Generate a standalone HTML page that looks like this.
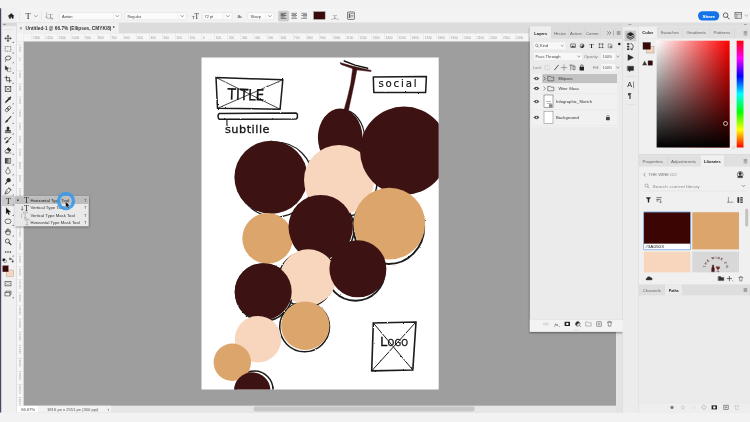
<!DOCTYPE html><html><head><meta charset="utf-8"><title>Photoshop</title>
<style>html,body{margin:0;padding:0;background:#f2f2f2;overflow:hidden}svg{display:block}text{font-family:"Liberation Sans", sans-serif;white-space:pre}</style></head><body>
<svg width="750" height="422" viewBox="0 0 750 422" style="will-change:transform">
<defs>
<linearGradient id="gw" x1="0" y1="0" x2="1" y2="0"><stop offset="0" stop-color="#fff"/><stop offset="1" stop-color="#ff0000"/></linearGradient>
<linearGradient id="gb" x1="0" y1="0" x2="0" y2="1"><stop offset="0" stop-color="#000" stop-opacity="0"/><stop offset="1" stop-color="#000"/></linearGradient>
<linearGradient id="hue" x1="0" y1="0" x2="0" y2="1"><stop offset="0" stop-color="#f00"/><stop offset="0.167" stop-color="#f0f"/><stop offset="0.333" stop-color="#00f"/><stop offset="0.5" stop-color="#0ff"/><stop offset="0.667" stop-color="#0f0"/><stop offset="0.833" stop-color="#ff0"/><stop offset="1" stop-color="#f00"/></linearGradient>
<clipPath id="doc"><rect x="201.5" y="57.5" width="237.2" height="332"/></clipPath>
<filter id="sh" x="-10%" y="-10%" width="120%" height="120%"><feGaussianBlur stdDeviation="1.2"/></filter>
<filter id="rough" x="-5%" y="-5%" width="110%" height="110%"><feTurbulence type="fractalNoise" baseFrequency="0.55" numOctaves="2" seed="3" result="n"/><feDisplacementMap in="SourceGraphic" in2="n" scale="1.8" xChannelSelector="R" yChannelSelector="G"/></filter>
</defs>
<rect x="0" y="0" width="750" height="422" fill="#f2f2f2" />
<rect x="0" y="0" width="750" height="8.3" fill="#f2f2f2" />
<rect x="0" y="8.3" width="750" height="14.4" fill="#f3f3f3" />
<rect x="0" y="8.0" width="750" height="0.5" fill="#e6e6e6" />
<rect x="0" y="8.5" width="750" height="0.9" fill="#f8f8f8" />
<rect x="16" y="22.5" width="608" height="390" fill="#dcdcdc" />
<rect x="23.5" y="41.3" width="593" height="364.5" fill="#9e9e9e" />
<rect x="16.5" y="22.8" width="102.3" height="10.6" fill="#f0f0f0" />
<text x="19.5" y="29.6" font-size="4.5" fill="#555" text-anchor="start" font-weight="normal" >×</text>
<text x="25.6" y="29.7" font-size="4.7" fill="#333" text-anchor="start" font-weight="bold" textLength="89" lengthAdjust="spacingAndGlyphs" >Untitled-1 @ 66.7% (Ellipses, CMYK/8) *</text>
<rect x="16.5" y="33.4" width="600" height="7.9" fill="#f6f6f6" />
<rect x="16.5" y="33.4" width="7" height="372.4" fill="#f6f6f6" />
<rect x="16.5" y="41.0" width="600" height="0.4" fill="#cfcfcf" />
<rect x="23.3" y="33.2" width="0.4" height="372.6" fill="#cfcfcf" />
<rect x="31.72" y="33.4" width="0.35" height="7.6" fill="#d6d6d6" />
<rect x="34.98" y="39.2" width="0.3" height="1.8" fill="#dcdcdc" />
<rect x="38.25" y="38.4" width="0.3" height="2.6" fill="#dcdcdc" />
<rect x="41.52" y="39.2" width="0.3" height="1.8" fill="#dcdcdc" />
<text x="32.92" y="39.4" font-size="3.2" fill="#9a9a9a" text-anchor="start" font-weight="normal" >1300</text>
<rect x="44.78" y="33.4" width="0.35" height="7.6" fill="#d6d6d6" />
<rect x="48.05" y="39.2" width="0.3" height="1.8" fill="#dcdcdc" />
<rect x="51.31" y="38.4" width="0.3" height="2.6" fill="#dcdcdc" />
<rect x="54.58" y="39.2" width="0.3" height="1.8" fill="#dcdcdc" />
<text x="45.98" y="39.4" font-size="3.2" fill="#9a9a9a" text-anchor="start" font-weight="normal" >1200</text>
<rect x="57.84" y="33.4" width="0.35" height="7.6" fill="#d6d6d6" />
<rect x="61.11" y="39.2" width="0.3" height="1.8" fill="#dcdcdc" />
<rect x="64.37" y="38.4" width="0.3" height="2.6" fill="#dcdcdc" />
<rect x="67.64" y="39.2" width="0.3" height="1.8" fill="#dcdcdc" />
<text x="59.04" y="39.4" font-size="3.2" fill="#9a9a9a" text-anchor="start" font-weight="normal" >1100</text>
<rect x="70.9" y="33.4" width="0.35" height="7.6" fill="#d6d6d6" />
<rect x="74.17" y="39.2" width="0.3" height="1.8" fill="#dcdcdc" />
<rect x="77.43" y="38.4" width="0.3" height="2.6" fill="#dcdcdc" />
<rect x="80.7" y="39.2" width="0.3" height="1.8" fill="#dcdcdc" />
<text x="72.1" y="39.4" font-size="3.2" fill="#9a9a9a" text-anchor="start" font-weight="normal" >1000</text>
<rect x="83.96" y="33.4" width="0.35" height="7.6" fill="#d6d6d6" />
<rect x="87.22" y="39.2" width="0.3" height="1.8" fill="#dcdcdc" />
<rect x="90.49" y="38.4" width="0.3" height="2.6" fill="#dcdcdc" />
<rect x="93.75" y="39.2" width="0.3" height="1.8" fill="#dcdcdc" />
<text x="85.16" y="39.4" font-size="3.2" fill="#9a9a9a" text-anchor="start" font-weight="normal" >900</text>
<rect x="97.02" y="33.4" width="0.35" height="7.6" fill="#d6d6d6" />
<rect x="100.28" y="39.2" width="0.3" height="1.8" fill="#dcdcdc" />
<rect x="103.55" y="38.4" width="0.3" height="2.6" fill="#dcdcdc" />
<rect x="106.81" y="39.2" width="0.3" height="1.8" fill="#dcdcdc" />
<text x="98.22" y="39.4" font-size="3.2" fill="#9a9a9a" text-anchor="start" font-weight="normal" >800</text>
<rect x="110.08" y="33.4" width="0.35" height="7.6" fill="#d6d6d6" />
<rect x="113.34" y="39.2" width="0.3" height="1.8" fill="#dcdcdc" />
<rect x="116.61" y="38.4" width="0.3" height="2.6" fill="#dcdcdc" />
<rect x="119.88" y="39.2" width="0.3" height="1.8" fill="#dcdcdc" />
<text x="111.28" y="39.4" font-size="3.2" fill="#9a9a9a" text-anchor="start" font-weight="normal" >700</text>
<rect x="123.14" y="33.4" width="0.35" height="7.6" fill="#d6d6d6" />
<rect x="126.41" y="39.2" width="0.3" height="1.8" fill="#dcdcdc" />
<rect x="129.67" y="38.4" width="0.3" height="2.6" fill="#dcdcdc" />
<rect x="132.94" y="39.2" width="0.3" height="1.8" fill="#dcdcdc" />
<text x="124.34" y="39.4" font-size="3.2" fill="#9a9a9a" text-anchor="start" font-weight="normal" >600</text>
<rect x="136.2" y="33.4" width="0.35" height="7.6" fill="#d6d6d6" />
<rect x="139.46" y="39.2" width="0.3" height="1.8" fill="#dcdcdc" />
<rect x="142.73" y="38.4" width="0.3" height="2.6" fill="#dcdcdc" />
<rect x="145.99" y="39.2" width="0.3" height="1.8" fill="#dcdcdc" />
<text x="137.4" y="39.4" font-size="3.2" fill="#9a9a9a" text-anchor="start" font-weight="normal" >500</text>
<rect x="149.26" y="33.4" width="0.35" height="7.6" fill="#d6d6d6" />
<rect x="152.52" y="39.2" width="0.3" height="1.8" fill="#dcdcdc" />
<rect x="155.79" y="38.4" width="0.3" height="2.6" fill="#dcdcdc" />
<rect x="159.05" y="39.2" width="0.3" height="1.8" fill="#dcdcdc" />
<text x="150.46" y="39.4" font-size="3.2" fill="#9a9a9a" text-anchor="start" font-weight="normal" >400</text>
<rect x="162.32" y="33.4" width="0.35" height="7.6" fill="#d6d6d6" />
<rect x="165.58" y="39.2" width="0.3" height="1.8" fill="#dcdcdc" />
<rect x="168.85" y="38.4" width="0.3" height="2.6" fill="#dcdcdc" />
<rect x="172.11" y="39.2" width="0.3" height="1.8" fill="#dcdcdc" />
<text x="163.52" y="39.4" font-size="3.2" fill="#9a9a9a" text-anchor="start" font-weight="normal" >300</text>
<rect x="175.38" y="33.4" width="0.35" height="7.6" fill="#d6d6d6" />
<rect x="178.64" y="39.2" width="0.3" height="1.8" fill="#dcdcdc" />
<rect x="181.91" y="38.4" width="0.3" height="2.6" fill="#dcdcdc" />
<rect x="185.17" y="39.2" width="0.3" height="1.8" fill="#dcdcdc" />
<text x="176.58" y="39.4" font-size="3.2" fill="#9a9a9a" text-anchor="start" font-weight="normal" >200</text>
<rect x="188.44" y="33.4" width="0.35" height="7.6" fill="#d6d6d6" />
<rect x="191.7" y="39.2" width="0.3" height="1.8" fill="#dcdcdc" />
<rect x="194.97" y="38.4" width="0.3" height="2.6" fill="#dcdcdc" />
<rect x="198.23" y="39.2" width="0.3" height="1.8" fill="#dcdcdc" />
<text x="189.64" y="39.4" font-size="3.2" fill="#9a9a9a" text-anchor="start" font-weight="normal" >100</text>
<rect x="201.5" y="33.4" width="0.35" height="7.6" fill="#d6d6d6" />
<rect x="204.76" y="39.2" width="0.3" height="1.8" fill="#dcdcdc" />
<rect x="208.03" y="38.4" width="0.3" height="2.6" fill="#dcdcdc" />
<rect x="211.29" y="39.2" width="0.3" height="1.8" fill="#dcdcdc" />
<text x="202.7" y="39.4" font-size="3.2" fill="#9a9a9a" text-anchor="start" font-weight="normal" >0</text>
<rect x="214.56" y="33.4" width="0.35" height="7.6" fill="#d6d6d6" />
<rect x="217.82" y="39.2" width="0.3" height="1.8" fill="#dcdcdc" />
<rect x="221.09" y="38.4" width="0.3" height="2.6" fill="#dcdcdc" />
<rect x="224.35" y="39.2" width="0.3" height="1.8" fill="#dcdcdc" />
<text x="215.76" y="39.4" font-size="3.2" fill="#9a9a9a" text-anchor="start" font-weight="normal" >100</text>
<rect x="227.62" y="33.4" width="0.35" height="7.6" fill="#d6d6d6" />
<rect x="230.88" y="39.2" width="0.3" height="1.8" fill="#dcdcdc" />
<rect x="234.15" y="38.4" width="0.3" height="2.6" fill="#dcdcdc" />
<rect x="237.41" y="39.2" width="0.3" height="1.8" fill="#dcdcdc" />
<text x="228.82" y="39.4" font-size="3.2" fill="#9a9a9a" text-anchor="start" font-weight="normal" >200</text>
<rect x="240.68" y="33.4" width="0.35" height="7.6" fill="#d6d6d6" />
<rect x="243.94" y="39.2" width="0.3" height="1.8" fill="#dcdcdc" />
<rect x="247.21" y="38.4" width="0.3" height="2.6" fill="#dcdcdc" />
<rect x="250.47" y="39.2" width="0.3" height="1.8" fill="#dcdcdc" />
<text x="241.88" y="39.4" font-size="3.2" fill="#9a9a9a" text-anchor="start" font-weight="normal" >300</text>
<rect x="253.74" y="33.4" width="0.35" height="7.6" fill="#d6d6d6" />
<rect x="257.0" y="39.2" width="0.3" height="1.8" fill="#dcdcdc" />
<rect x="260.27" y="38.4" width="0.3" height="2.6" fill="#dcdcdc" />
<rect x="263.54" y="39.2" width="0.3" height="1.8" fill="#dcdcdc" />
<text x="254.94" y="39.4" font-size="3.2" fill="#9a9a9a" text-anchor="start" font-weight="normal" >400</text>
<rect x="266.8" y="33.4" width="0.35" height="7.6" fill="#d6d6d6" />
<rect x="270.06" y="39.2" width="0.3" height="1.8" fill="#dcdcdc" />
<rect x="273.33" y="38.4" width="0.3" height="2.6" fill="#dcdcdc" />
<rect x="276.6" y="39.2" width="0.3" height="1.8" fill="#dcdcdc" />
<text x="268.0" y="39.4" font-size="3.2" fill="#9a9a9a" text-anchor="start" font-weight="normal" >500</text>
<rect x="279.86" y="33.4" width="0.35" height="7.6" fill="#d6d6d6" />
<rect x="283.12" y="39.2" width="0.3" height="1.8" fill="#dcdcdc" />
<rect x="286.39" y="38.4" width="0.3" height="2.6" fill="#dcdcdc" />
<rect x="289.66" y="39.2" width="0.3" height="1.8" fill="#dcdcdc" />
<text x="281.06" y="39.4" font-size="3.2" fill="#9a9a9a" text-anchor="start" font-weight="normal" >600</text>
<rect x="292.92" y="33.4" width="0.35" height="7.6" fill="#d6d6d6" />
<rect x="296.19" y="39.2" width="0.3" height="1.8" fill="#dcdcdc" />
<rect x="299.45" y="38.4" width="0.3" height="2.6" fill="#dcdcdc" />
<rect x="302.72" y="39.2" width="0.3" height="1.8" fill="#dcdcdc" />
<text x="294.12" y="39.4" font-size="3.2" fill="#9a9a9a" text-anchor="start" font-weight="normal" >700</text>
<rect x="305.98" y="33.4" width="0.35" height="7.6" fill="#d6d6d6" />
<rect x="309.25" y="39.2" width="0.3" height="1.8" fill="#dcdcdc" />
<rect x="312.51" y="38.4" width="0.3" height="2.6" fill="#dcdcdc" />
<rect x="315.78" y="39.2" width="0.3" height="1.8" fill="#dcdcdc" />
<text x="307.18" y="39.4" font-size="3.2" fill="#9a9a9a" text-anchor="start" font-weight="normal" >800</text>
<rect x="319.04" y="33.4" width="0.35" height="7.6" fill="#d6d6d6" />
<rect x="322.31" y="39.2" width="0.3" height="1.8" fill="#dcdcdc" />
<rect x="325.57" y="38.4" width="0.3" height="2.6" fill="#dcdcdc" />
<rect x="328.84" y="39.2" width="0.3" height="1.8" fill="#dcdcdc" />
<text x="320.24" y="39.4" font-size="3.2" fill="#9a9a9a" text-anchor="start" font-weight="normal" >900</text>
<rect x="332.1" y="33.4" width="0.35" height="7.6" fill="#d6d6d6" />
<rect x="335.37" y="39.2" width="0.3" height="1.8" fill="#dcdcdc" />
<rect x="338.63" y="38.4" width="0.3" height="2.6" fill="#dcdcdc" />
<rect x="341.9" y="39.2" width="0.3" height="1.8" fill="#dcdcdc" />
<text x="333.3" y="39.4" font-size="3.2" fill="#9a9a9a" text-anchor="start" font-weight="normal" >1000</text>
<rect x="345.16" y="33.4" width="0.35" height="7.6" fill="#d6d6d6" />
<rect x="348.42" y="39.2" width="0.3" height="1.8" fill="#dcdcdc" />
<rect x="351.69" y="38.4" width="0.3" height="2.6" fill="#dcdcdc" />
<rect x="354.95" y="39.2" width="0.3" height="1.8" fill="#dcdcdc" />
<text x="346.36" y="39.4" font-size="3.2" fill="#9a9a9a" text-anchor="start" font-weight="normal" >1100</text>
<rect x="358.22" y="33.4" width="0.35" height="7.6" fill="#d6d6d6" />
<rect x="361.49" y="39.2" width="0.3" height="1.8" fill="#dcdcdc" />
<rect x="364.75" y="38.4" width="0.3" height="2.6" fill="#dcdcdc" />
<rect x="368.02" y="39.2" width="0.3" height="1.8" fill="#dcdcdc" />
<text x="359.42" y="39.4" font-size="3.2" fill="#9a9a9a" text-anchor="start" font-weight="normal" >1200</text>
<rect x="371.28" y="33.4" width="0.35" height="7.6" fill="#d6d6d6" />
<rect x="374.54" y="39.2" width="0.3" height="1.8" fill="#dcdcdc" />
<rect x="377.81" y="38.4" width="0.3" height="2.6" fill="#dcdcdc" />
<rect x="381.07" y="39.2" width="0.3" height="1.8" fill="#dcdcdc" />
<text x="372.48" y="39.4" font-size="3.2" fill="#9a9a9a" text-anchor="start" font-weight="normal" >1300</text>
<rect x="384.34" y="33.4" width="0.35" height="7.6" fill="#d6d6d6" />
<rect x="387.61" y="39.2" width="0.3" height="1.8" fill="#dcdcdc" />
<rect x="390.87" y="38.4" width="0.3" height="2.6" fill="#dcdcdc" />
<rect x="394.14" y="39.2" width="0.3" height="1.8" fill="#dcdcdc" />
<text x="385.54" y="39.4" font-size="3.2" fill="#9a9a9a" text-anchor="start" font-weight="normal" >1400</text>
<rect x="397.4" y="33.4" width="0.35" height="7.6" fill="#d6d6d6" />
<rect x="400.66" y="39.2" width="0.3" height="1.8" fill="#dcdcdc" />
<rect x="403.93" y="38.4" width="0.3" height="2.6" fill="#dcdcdc" />
<rect x="407.19" y="39.2" width="0.3" height="1.8" fill="#dcdcdc" />
<text x="398.6" y="39.4" font-size="3.2" fill="#9a9a9a" text-anchor="start" font-weight="normal" >1500</text>
<rect x="410.46" y="33.4" width="0.35" height="7.6" fill="#d6d6d6" />
<rect x="413.73" y="39.2" width="0.3" height="1.8" fill="#dcdcdc" />
<rect x="416.99" y="38.4" width="0.3" height="2.6" fill="#dcdcdc" />
<rect x="420.26" y="39.2" width="0.3" height="1.8" fill="#dcdcdc" />
<text x="411.66" y="39.4" font-size="3.2" fill="#9a9a9a" text-anchor="start" font-weight="normal" >1600</text>
<rect x="423.52" y="33.4" width="0.35" height="7.6" fill="#d6d6d6" />
<rect x="426.78" y="39.2" width="0.3" height="1.8" fill="#dcdcdc" />
<rect x="430.05" y="38.4" width="0.3" height="2.6" fill="#dcdcdc" />
<rect x="433.31" y="39.2" width="0.3" height="1.8" fill="#dcdcdc" />
<text x="424.72" y="39.4" font-size="3.2" fill="#9a9a9a" text-anchor="start" font-weight="normal" >1700</text>
<rect x="436.58" y="33.4" width="0.35" height="7.6" fill="#d6d6d6" />
<rect x="439.85" y="39.2" width="0.3" height="1.8" fill="#dcdcdc" />
<rect x="443.11" y="38.4" width="0.3" height="2.6" fill="#dcdcdc" />
<rect x="446.38" y="39.2" width="0.3" height="1.8" fill="#dcdcdc" />
<text x="437.78" y="39.4" font-size="3.2" fill="#9a9a9a" text-anchor="start" font-weight="normal" >1800</text>
<rect x="449.64" y="33.4" width="0.35" height="7.6" fill="#d6d6d6" />
<rect x="452.9" y="39.2" width="0.3" height="1.8" fill="#dcdcdc" />
<rect x="456.17" y="38.4" width="0.3" height="2.6" fill="#dcdcdc" />
<rect x="459.44" y="39.2" width="0.3" height="1.8" fill="#dcdcdc" />
<text x="450.84" y="39.4" font-size="3.2" fill="#9a9a9a" text-anchor="start" font-weight="normal" >1900</text>
<rect x="462.7" y="33.4" width="0.35" height="7.6" fill="#d6d6d6" />
<rect x="465.96" y="39.2" width="0.3" height="1.8" fill="#dcdcdc" />
<rect x="469.23" y="38.4" width="0.3" height="2.6" fill="#dcdcdc" />
<rect x="472.5" y="39.2" width="0.3" height="1.8" fill="#dcdcdc" />
<text x="463.9" y="39.4" font-size="3.2" fill="#9a9a9a" text-anchor="start" font-weight="normal" >2000</text>
<rect x="475.76" y="33.4" width="0.35" height="7.6" fill="#d6d6d6" />
<rect x="479.02" y="39.2" width="0.3" height="1.8" fill="#dcdcdc" />
<rect x="482.29" y="38.4" width="0.3" height="2.6" fill="#dcdcdc" />
<rect x="485.56" y="39.2" width="0.3" height="1.8" fill="#dcdcdc" />
<text x="476.96" y="39.4" font-size="3.2" fill="#9a9a9a" text-anchor="start" font-weight="normal" >2100</text>
<rect x="488.82" y="33.4" width="0.35" height="7.6" fill="#d6d6d6" />
<rect x="492.08" y="39.2" width="0.3" height="1.8" fill="#dcdcdc" />
<rect x="495.35" y="38.4" width="0.3" height="2.6" fill="#dcdcdc" />
<rect x="498.62" y="39.2" width="0.3" height="1.8" fill="#dcdcdc" />
<text x="490.02" y="39.4" font-size="3.2" fill="#9a9a9a" text-anchor="start" font-weight="normal" >2200</text>
<rect x="501.88" y="33.4" width="0.35" height="7.6" fill="#d6d6d6" />
<rect x="505.14" y="39.2" width="0.3" height="1.8" fill="#dcdcdc" />
<rect x="508.41" y="38.4" width="0.3" height="2.6" fill="#dcdcdc" />
<rect x="511.68" y="39.2" width="0.3" height="1.8" fill="#dcdcdc" />
<text x="503.08" y="39.4" font-size="3.2" fill="#9a9a9a" text-anchor="start" font-weight="normal" >2300</text>
<rect x="514.94" y="33.4" width="0.35" height="7.6" fill="#d6d6d6" />
<rect x="518.21" y="39.2" width="0.3" height="1.8" fill="#dcdcdc" />
<rect x="521.47" y="38.4" width="0.3" height="2.6" fill="#dcdcdc" />
<rect x="524.74" y="39.2" width="0.3" height="1.8" fill="#dcdcdc" />
<text x="516.14" y="39.4" font-size="3.2" fill="#9a9a9a" text-anchor="start" font-weight="normal" >2400</text>
<rect x="528.0" y="33.4" width="0.35" height="7.6" fill="#d6d6d6" />
<rect x="531.26" y="39.2" width="0.3" height="1.8" fill="#dcdcdc" />
<rect x="534.53" y="38.4" width="0.3" height="2.6" fill="#dcdcdc" />
<rect x="537.79" y="39.2" width="0.3" height="1.8" fill="#dcdcdc" />
<text x="529.2" y="39.4" font-size="3.2" fill="#9a9a9a" text-anchor="start" font-weight="normal" >2500</text>
<rect x="541.06" y="33.4" width="0.35" height="7.6" fill="#d6d6d6" />
<rect x="544.32" y="39.2" width="0.3" height="1.8" fill="#dcdcdc" />
<rect x="547.59" y="38.4" width="0.3" height="2.6" fill="#dcdcdc" />
<rect x="550.85" y="39.2" width="0.3" height="1.8" fill="#dcdcdc" />
<text x="542.26" y="39.4" font-size="3.2" fill="#9a9a9a" text-anchor="start" font-weight="normal" >2600</text>
<rect x="554.12" y="33.4" width="0.35" height="7.6" fill="#d6d6d6" />
<rect x="557.38" y="39.2" width="0.3" height="1.8" fill="#dcdcdc" />
<rect x="560.65" y="38.4" width="0.3" height="2.6" fill="#dcdcdc" />
<rect x="563.91" y="39.2" width="0.3" height="1.8" fill="#dcdcdc" />
<text x="555.32" y="39.4" font-size="3.2" fill="#9a9a9a" text-anchor="start" font-weight="normal" >2700</text>
<rect x="567.18" y="33.4" width="0.35" height="7.6" fill="#d6d6d6" />
<rect x="570.45" y="39.2" width="0.3" height="1.8" fill="#dcdcdc" />
<rect x="573.71" y="38.4" width="0.3" height="2.6" fill="#dcdcdc" />
<rect x="576.98" y="39.2" width="0.3" height="1.8" fill="#dcdcdc" />
<text x="568.38" y="39.4" font-size="3.2" fill="#9a9a9a" text-anchor="start" font-weight="normal" >2800</text>
<rect x="580.24" y="33.4" width="0.35" height="7.6" fill="#d6d6d6" />
<rect x="583.5" y="39.2" width="0.3" height="1.8" fill="#dcdcdc" />
<rect x="586.77" y="38.4" width="0.3" height="2.6" fill="#dcdcdc" />
<rect x="590.03" y="39.2" width="0.3" height="1.8" fill="#dcdcdc" />
<text x="581.44" y="39.4" font-size="3.2" fill="#9a9a9a" text-anchor="start" font-weight="normal" >2900</text>
<rect x="593.3" y="33.4" width="0.35" height="7.6" fill="#d6d6d6" />
<rect x="596.56" y="39.2" width="0.3" height="1.8" fill="#dcdcdc" />
<rect x="599.83" y="38.4" width="0.3" height="2.6" fill="#dcdcdc" />
<rect x="603.09" y="39.2" width="0.3" height="1.8" fill="#dcdcdc" />
<text x="594.5" y="39.4" font-size="3.2" fill="#9a9a9a" text-anchor="start" font-weight="normal" >3000</text>
<rect x="606.36" y="33.4" width="0.35" height="7.6" fill="#d6d6d6" />
<rect x="609.62" y="39.2" width="0.3" height="1.8" fill="#dcdcdc" />
<rect x="612.89" y="38.4" width="0.3" height="2.6" fill="#dcdcdc" />
<text x="607.56" y="39.4" font-size="3.2" fill="#9a9a9a" text-anchor="start" font-weight="normal" >3100</text>
<rect x="16.7" y="44.44" width="6.6" height="0.35" fill="#d6d6d6" />
<rect x="21.6" y="47.7" width="1.7" height="0.3" fill="#dcdcdc" />
<rect x="20.8" y="50.97" width="2.5" height="0.3" fill="#dcdcdc" />
<rect x="21.6" y="54.23" width="1.7" height="0.3" fill="#dcdcdc" />
<text x="19.9" y="47.64" font-size="2.7" fill="#9a9a9a" text-anchor="middle">1</text>
<text x="19.9" y="49.74" font-size="2.7" fill="#9a9a9a" text-anchor="middle">0</text>
<text x="19.9" y="51.84" font-size="2.7" fill="#9a9a9a" text-anchor="middle">0</text>
<rect x="16.7" y="57.5" width="6.6" height="0.35" fill="#d6d6d6" />
<rect x="21.6" y="60.77" width="1.7" height="0.3" fill="#dcdcdc" />
<rect x="20.8" y="64.03" width="2.5" height="0.3" fill="#dcdcdc" />
<rect x="21.6" y="67.3" width="1.7" height="0.3" fill="#dcdcdc" />
<text x="19.9" y="60.7" font-size="2.7" fill="#9a9a9a" text-anchor="middle">0</text>
<rect x="16.7" y="70.56" width="6.6" height="0.35" fill="#d6d6d6" />
<rect x="21.6" y="73.83" width="1.7" height="0.3" fill="#dcdcdc" />
<rect x="20.8" y="77.09" width="2.5" height="0.3" fill="#dcdcdc" />
<rect x="21.6" y="80.36" width="1.7" height="0.3" fill="#dcdcdc" />
<text x="19.9" y="73.76" font-size="2.7" fill="#9a9a9a" text-anchor="middle">1</text>
<text x="19.9" y="75.86" font-size="2.7" fill="#9a9a9a" text-anchor="middle">0</text>
<text x="19.9" y="77.96" font-size="2.7" fill="#9a9a9a" text-anchor="middle">0</text>
<rect x="16.7" y="83.62" width="6.6" height="0.35" fill="#d6d6d6" />
<rect x="21.6" y="86.89" width="1.7" height="0.3" fill="#dcdcdc" />
<rect x="20.8" y="90.15" width="2.5" height="0.3" fill="#dcdcdc" />
<rect x="21.6" y="93.42" width="1.7" height="0.3" fill="#dcdcdc" />
<text x="19.9" y="86.82" font-size="2.7" fill="#9a9a9a" text-anchor="middle">2</text>
<text x="19.9" y="88.92" font-size="2.7" fill="#9a9a9a" text-anchor="middle">0</text>
<text x="19.9" y="91.02" font-size="2.7" fill="#9a9a9a" text-anchor="middle">0</text>
<rect x="16.7" y="96.68" width="6.6" height="0.35" fill="#d6d6d6" />
<rect x="21.6" y="99.95" width="1.7" height="0.3" fill="#dcdcdc" />
<rect x="20.8" y="103.21" width="2.5" height="0.3" fill="#dcdcdc" />
<rect x="21.6" y="106.48" width="1.7" height="0.3" fill="#dcdcdc" />
<text x="19.9" y="99.88" font-size="2.7" fill="#9a9a9a" text-anchor="middle">3</text>
<text x="19.9" y="101.98" font-size="2.7" fill="#9a9a9a" text-anchor="middle">0</text>
<text x="19.9" y="104.08" font-size="2.7" fill="#9a9a9a" text-anchor="middle">0</text>
<rect x="16.7" y="109.74" width="6.6" height="0.35" fill="#d6d6d6" />
<rect x="21.6" y="113.01" width="1.7" height="0.3" fill="#dcdcdc" />
<rect x="20.8" y="116.27" width="2.5" height="0.3" fill="#dcdcdc" />
<rect x="21.6" y="119.54" width="1.7" height="0.3" fill="#dcdcdc" />
<text x="19.9" y="112.94" font-size="2.7" fill="#9a9a9a" text-anchor="middle">4</text>
<text x="19.9" y="115.04" font-size="2.7" fill="#9a9a9a" text-anchor="middle">0</text>
<text x="19.9" y="117.14" font-size="2.7" fill="#9a9a9a" text-anchor="middle">0</text>
<rect x="16.7" y="122.8" width="6.6" height="0.35" fill="#d6d6d6" />
<rect x="21.6" y="126.06" width="1.7" height="0.3" fill="#dcdcdc" />
<rect x="20.8" y="129.33" width="2.5" height="0.3" fill="#dcdcdc" />
<rect x="21.6" y="132.59" width="1.7" height="0.3" fill="#dcdcdc" />
<text x="19.9" y="126.0" font-size="2.7" fill="#9a9a9a" text-anchor="middle">5</text>
<text x="19.9" y="128.1" font-size="2.7" fill="#9a9a9a" text-anchor="middle">0</text>
<text x="19.9" y="130.2" font-size="2.7" fill="#9a9a9a" text-anchor="middle">0</text>
<rect x="16.7" y="135.86" width="6.6" height="0.35" fill="#d6d6d6" />
<rect x="21.6" y="139.12" width="1.7" height="0.3" fill="#dcdcdc" />
<rect x="20.8" y="142.39" width="2.5" height="0.3" fill="#dcdcdc" />
<rect x="21.6" y="145.66" width="1.7" height="0.3" fill="#dcdcdc" />
<text x="19.9" y="139.06" font-size="2.7" fill="#9a9a9a" text-anchor="middle">6</text>
<text x="19.9" y="141.16" font-size="2.7" fill="#9a9a9a" text-anchor="middle">0</text>
<text x="19.9" y="143.26" font-size="2.7" fill="#9a9a9a" text-anchor="middle">0</text>
<rect x="16.7" y="148.92" width="6.6" height="0.35" fill="#d6d6d6" />
<rect x="21.6" y="152.19" width="1.7" height="0.3" fill="#dcdcdc" />
<rect x="20.8" y="155.45" width="2.5" height="0.3" fill="#dcdcdc" />
<rect x="21.6" y="158.72" width="1.7" height="0.3" fill="#dcdcdc" />
<text x="19.9" y="152.12" font-size="2.7" fill="#9a9a9a" text-anchor="middle">7</text>
<text x="19.9" y="154.22" font-size="2.7" fill="#9a9a9a" text-anchor="middle">0</text>
<text x="19.9" y="156.32" font-size="2.7" fill="#9a9a9a" text-anchor="middle">0</text>
<rect x="16.7" y="161.98" width="6.6" height="0.35" fill="#d6d6d6" />
<rect x="21.6" y="165.25" width="1.7" height="0.3" fill="#dcdcdc" />
<rect x="20.8" y="168.51" width="2.5" height="0.3" fill="#dcdcdc" />
<rect x="21.6" y="171.78" width="1.7" height="0.3" fill="#dcdcdc" />
<text x="19.9" y="165.18" font-size="2.7" fill="#9a9a9a" text-anchor="middle">8</text>
<text x="19.9" y="167.28" font-size="2.7" fill="#9a9a9a" text-anchor="middle">0</text>
<text x="19.9" y="169.38" font-size="2.7" fill="#9a9a9a" text-anchor="middle">0</text>
<rect x="16.7" y="175.04" width="6.6" height="0.35" fill="#d6d6d6" />
<rect x="21.6" y="178.31" width="1.7" height="0.3" fill="#dcdcdc" />
<rect x="20.8" y="181.57" width="2.5" height="0.3" fill="#dcdcdc" />
<rect x="21.6" y="184.84" width="1.7" height="0.3" fill="#dcdcdc" />
<text x="19.9" y="178.24" font-size="2.7" fill="#9a9a9a" text-anchor="middle">9</text>
<text x="19.9" y="180.34" font-size="2.7" fill="#9a9a9a" text-anchor="middle">0</text>
<text x="19.9" y="182.44" font-size="2.7" fill="#9a9a9a" text-anchor="middle">0</text>
<rect x="16.7" y="188.1" width="6.6" height="0.35" fill="#d6d6d6" />
<rect x="21.6" y="191.36" width="1.7" height="0.3" fill="#dcdcdc" />
<rect x="20.8" y="194.63" width="2.5" height="0.3" fill="#dcdcdc" />
<rect x="21.6" y="197.89" width="1.7" height="0.3" fill="#dcdcdc" />
<text x="19.9" y="191.3" font-size="2.7" fill="#9a9a9a" text-anchor="middle">1</text>
<text x="19.9" y="193.4" font-size="2.7" fill="#9a9a9a" text-anchor="middle">0</text>
<text x="19.9" y="195.5" font-size="2.7" fill="#9a9a9a" text-anchor="middle">0</text>
<text x="19.9" y="197.6" font-size="2.7" fill="#9a9a9a" text-anchor="middle">0</text>
<rect x="16.7" y="201.16" width="6.6" height="0.35" fill="#d6d6d6" />
<rect x="21.6" y="204.42" width="1.7" height="0.3" fill="#dcdcdc" />
<rect x="20.8" y="207.69" width="2.5" height="0.3" fill="#dcdcdc" />
<rect x="21.6" y="210.95" width="1.7" height="0.3" fill="#dcdcdc" />
<text x="19.9" y="204.36" font-size="2.7" fill="#9a9a9a" text-anchor="middle">1</text>
<text x="19.9" y="206.46" font-size="2.7" fill="#9a9a9a" text-anchor="middle">1</text>
<text x="19.9" y="208.56" font-size="2.7" fill="#9a9a9a" text-anchor="middle">0</text>
<text x="19.9" y="210.66" font-size="2.7" fill="#9a9a9a" text-anchor="middle">0</text>
<rect x="16.7" y="214.22" width="6.6" height="0.35" fill="#d6d6d6" />
<rect x="21.6" y="217.48" width="1.7" height="0.3" fill="#dcdcdc" />
<rect x="20.8" y="220.75" width="2.5" height="0.3" fill="#dcdcdc" />
<rect x="21.6" y="224.01" width="1.7" height="0.3" fill="#dcdcdc" />
<text x="19.9" y="217.42" font-size="2.7" fill="#9a9a9a" text-anchor="middle">1</text>
<text x="19.9" y="219.52" font-size="2.7" fill="#9a9a9a" text-anchor="middle">2</text>
<text x="19.9" y="221.62" font-size="2.7" fill="#9a9a9a" text-anchor="middle">0</text>
<text x="19.9" y="223.72" font-size="2.7" fill="#9a9a9a" text-anchor="middle">0</text>
<rect x="16.7" y="227.28" width="6.6" height="0.35" fill="#d6d6d6" />
<rect x="21.6" y="230.54" width="1.7" height="0.3" fill="#dcdcdc" />
<rect x="20.8" y="233.81" width="2.5" height="0.3" fill="#dcdcdc" />
<rect x="21.6" y="237.07" width="1.7" height="0.3" fill="#dcdcdc" />
<text x="19.9" y="230.48" font-size="2.7" fill="#9a9a9a" text-anchor="middle">1</text>
<text x="19.9" y="232.58" font-size="2.7" fill="#9a9a9a" text-anchor="middle">3</text>
<text x="19.9" y="234.68" font-size="2.7" fill="#9a9a9a" text-anchor="middle">0</text>
<text x="19.9" y="236.78" font-size="2.7" fill="#9a9a9a" text-anchor="middle">0</text>
<rect x="16.7" y="240.34" width="6.6" height="0.35" fill="#d6d6d6" />
<rect x="21.6" y="243.6" width="1.7" height="0.3" fill="#dcdcdc" />
<rect x="20.8" y="246.87" width="2.5" height="0.3" fill="#dcdcdc" />
<rect x="21.6" y="250.13" width="1.7" height="0.3" fill="#dcdcdc" />
<text x="19.9" y="243.54" font-size="2.7" fill="#9a9a9a" text-anchor="middle">1</text>
<text x="19.9" y="245.64" font-size="2.7" fill="#9a9a9a" text-anchor="middle">4</text>
<text x="19.9" y="247.74" font-size="2.7" fill="#9a9a9a" text-anchor="middle">0</text>
<text x="19.9" y="249.84" font-size="2.7" fill="#9a9a9a" text-anchor="middle">0</text>
<rect x="16.7" y="253.4" width="6.6" height="0.35" fill="#d6d6d6" />
<rect x="21.6" y="256.67" width="1.7" height="0.3" fill="#dcdcdc" />
<rect x="20.8" y="259.93" width="2.5" height="0.3" fill="#dcdcdc" />
<rect x="21.6" y="263.19" width="1.7" height="0.3" fill="#dcdcdc" />
<text x="19.9" y="256.6" font-size="2.7" fill="#9a9a9a" text-anchor="middle">1</text>
<text x="19.9" y="258.7" font-size="2.7" fill="#9a9a9a" text-anchor="middle">5</text>
<text x="19.9" y="260.8" font-size="2.7" fill="#9a9a9a" text-anchor="middle">0</text>
<text x="19.9" y="262.9" font-size="2.7" fill="#9a9a9a" text-anchor="middle">0</text>
<rect x="16.7" y="266.46" width="6.6" height="0.35" fill="#d6d6d6" />
<rect x="21.6" y="269.73" width="1.7" height="0.3" fill="#dcdcdc" />
<rect x="20.8" y="272.99" width="2.5" height="0.3" fill="#dcdcdc" />
<rect x="21.6" y="276.26" width="1.7" height="0.3" fill="#dcdcdc" />
<text x="19.9" y="269.66" font-size="2.7" fill="#9a9a9a" text-anchor="middle">1</text>
<text x="19.9" y="271.76" font-size="2.7" fill="#9a9a9a" text-anchor="middle">6</text>
<text x="19.9" y="273.86" font-size="2.7" fill="#9a9a9a" text-anchor="middle">0</text>
<text x="19.9" y="275.96" font-size="2.7" fill="#9a9a9a" text-anchor="middle">0</text>
<rect x="16.7" y="279.52" width="6.6" height="0.35" fill="#d6d6d6" />
<rect x="21.6" y="282.78" width="1.7" height="0.3" fill="#dcdcdc" />
<rect x="20.8" y="286.05" width="2.5" height="0.3" fill="#dcdcdc" />
<rect x="21.6" y="289.31" width="1.7" height="0.3" fill="#dcdcdc" />
<text x="19.9" y="282.72" font-size="2.7" fill="#9a9a9a" text-anchor="middle">1</text>
<text x="19.9" y="284.82" font-size="2.7" fill="#9a9a9a" text-anchor="middle">7</text>
<text x="19.9" y="286.92" font-size="2.7" fill="#9a9a9a" text-anchor="middle">0</text>
<text x="19.9" y="289.02" font-size="2.7" fill="#9a9a9a" text-anchor="middle">0</text>
<rect x="16.7" y="292.58" width="6.6" height="0.35" fill="#d6d6d6" />
<rect x="21.6" y="295.85" width="1.7" height="0.3" fill="#dcdcdc" />
<rect x="20.8" y="299.11" width="2.5" height="0.3" fill="#dcdcdc" />
<rect x="21.6" y="302.38" width="1.7" height="0.3" fill="#dcdcdc" />
<text x="19.9" y="295.78" font-size="2.7" fill="#9a9a9a" text-anchor="middle">1</text>
<text x="19.9" y="297.88" font-size="2.7" fill="#9a9a9a" text-anchor="middle">8</text>
<text x="19.9" y="299.98" font-size="2.7" fill="#9a9a9a" text-anchor="middle">0</text>
<text x="19.9" y="302.08" font-size="2.7" fill="#9a9a9a" text-anchor="middle">0</text>
<rect x="16.7" y="305.64" width="6.6" height="0.35" fill="#d6d6d6" />
<rect x="21.6" y="308.9" width="1.7" height="0.3" fill="#dcdcdc" />
<rect x="20.8" y="312.17" width="2.5" height="0.3" fill="#dcdcdc" />
<rect x="21.6" y="315.44" width="1.7" height="0.3" fill="#dcdcdc" />
<text x="19.9" y="308.84" font-size="2.7" fill="#9a9a9a" text-anchor="middle">1</text>
<text x="19.9" y="310.94" font-size="2.7" fill="#9a9a9a" text-anchor="middle">9</text>
<text x="19.9" y="313.04" font-size="2.7" fill="#9a9a9a" text-anchor="middle">0</text>
<text x="19.9" y="315.14" font-size="2.7" fill="#9a9a9a" text-anchor="middle">0</text>
<rect x="16.7" y="318.7" width="6.6" height="0.35" fill="#d6d6d6" />
<rect x="21.6" y="321.96" width="1.7" height="0.3" fill="#dcdcdc" />
<rect x="20.8" y="325.23" width="2.5" height="0.3" fill="#dcdcdc" />
<rect x="21.6" y="328.5" width="1.7" height="0.3" fill="#dcdcdc" />
<text x="19.9" y="321.9" font-size="2.7" fill="#9a9a9a" text-anchor="middle">2</text>
<text x="19.9" y="324.0" font-size="2.7" fill="#9a9a9a" text-anchor="middle">0</text>
<text x="19.9" y="326.1" font-size="2.7" fill="#9a9a9a" text-anchor="middle">0</text>
<text x="19.9" y="328.2" font-size="2.7" fill="#9a9a9a" text-anchor="middle">0</text>
<rect x="16.7" y="331.76" width="6.6" height="0.35" fill="#d6d6d6" />
<rect x="21.6" y="335.02" width="1.7" height="0.3" fill="#dcdcdc" />
<rect x="20.8" y="338.29" width="2.5" height="0.3" fill="#dcdcdc" />
<rect x="21.6" y="341.56" width="1.7" height="0.3" fill="#dcdcdc" />
<text x="19.9" y="334.96" font-size="2.7" fill="#9a9a9a" text-anchor="middle">2</text>
<text x="19.9" y="337.06" font-size="2.7" fill="#9a9a9a" text-anchor="middle">1</text>
<text x="19.9" y="339.16" font-size="2.7" fill="#9a9a9a" text-anchor="middle">0</text>
<text x="19.9" y="341.26" font-size="2.7" fill="#9a9a9a" text-anchor="middle">0</text>
<rect x="16.7" y="344.82" width="6.6" height="0.35" fill="#d6d6d6" />
<rect x="21.6" y="348.08" width="1.7" height="0.3" fill="#dcdcdc" />
<rect x="20.8" y="351.35" width="2.5" height="0.3" fill="#dcdcdc" />
<rect x="21.6" y="354.62" width="1.7" height="0.3" fill="#dcdcdc" />
<text x="19.9" y="348.02" font-size="2.7" fill="#9a9a9a" text-anchor="middle">2</text>
<text x="19.9" y="350.12" font-size="2.7" fill="#9a9a9a" text-anchor="middle">2</text>
<text x="19.9" y="352.22" font-size="2.7" fill="#9a9a9a" text-anchor="middle">0</text>
<text x="19.9" y="354.32" font-size="2.7" fill="#9a9a9a" text-anchor="middle">0</text>
<rect x="16.7" y="357.88" width="6.6" height="0.35" fill="#d6d6d6" />
<rect x="21.6" y="361.14" width="1.7" height="0.3" fill="#dcdcdc" />
<rect x="20.8" y="364.41" width="2.5" height="0.3" fill="#dcdcdc" />
<rect x="21.6" y="367.68" width="1.7" height="0.3" fill="#dcdcdc" />
<text x="19.9" y="361.08" font-size="2.7" fill="#9a9a9a" text-anchor="middle">2</text>
<text x="19.9" y="363.18" font-size="2.7" fill="#9a9a9a" text-anchor="middle">3</text>
<text x="19.9" y="365.28" font-size="2.7" fill="#9a9a9a" text-anchor="middle">0</text>
<text x="19.9" y="367.38" font-size="2.7" fill="#9a9a9a" text-anchor="middle">0</text>
<rect x="16.7" y="370.94" width="6.6" height="0.35" fill="#d6d6d6" />
<rect x="21.6" y="374.2" width="1.7" height="0.3" fill="#dcdcdc" />
<rect x="20.8" y="377.47" width="2.5" height="0.3" fill="#dcdcdc" />
<rect x="21.6" y="380.74" width="1.7" height="0.3" fill="#dcdcdc" />
<text x="19.9" y="374.14" font-size="2.7" fill="#9a9a9a" text-anchor="middle">2</text>
<text x="19.9" y="376.24" font-size="2.7" fill="#9a9a9a" text-anchor="middle">4</text>
<text x="19.9" y="378.34" font-size="2.7" fill="#9a9a9a" text-anchor="middle">0</text>
<text x="19.9" y="380.44" font-size="2.7" fill="#9a9a9a" text-anchor="middle">0</text>
<rect x="16.7" y="384.0" width="6.6" height="0.35" fill="#d6d6d6" />
<rect x="21.6" y="387.26" width="1.7" height="0.3" fill="#dcdcdc" />
<rect x="20.8" y="390.53" width="2.5" height="0.3" fill="#dcdcdc" />
<rect x="21.6" y="393.8" width="1.7" height="0.3" fill="#dcdcdc" />
<text x="19.9" y="387.2" font-size="2.7" fill="#9a9a9a" text-anchor="middle">2</text>
<text x="19.9" y="389.3" font-size="2.7" fill="#9a9a9a" text-anchor="middle">5</text>
<text x="19.9" y="391.4" font-size="2.7" fill="#9a9a9a" text-anchor="middle">0</text>
<text x="19.9" y="393.5" font-size="2.7" fill="#9a9a9a" text-anchor="middle">0</text>
<rect x="16.7" y="397.06" width="6.6" height="0.35" fill="#d6d6d6" />
<rect x="21.6" y="400.32" width="1.7" height="0.3" fill="#dcdcdc" />
<rect x="20.8" y="403.59" width="2.5" height="0.3" fill="#dcdcdc" />
<text x="19.9" y="400.26" font-size="2.7" fill="#9a9a9a" text-anchor="middle">2</text>
<text x="19.9" y="402.36" font-size="2.7" fill="#9a9a9a" text-anchor="middle">6</text>
<text x="19.9" y="404.46" font-size="2.7" fill="#9a9a9a" text-anchor="middle">0</text>
<text x="19.9" y="406.56" font-size="2.7" fill="#9a9a9a" text-anchor="middle">0</text>
<rect x="16.5" y="33.4" width="7" height="7.9" fill="#f6f6f6" />
<rect x="201.5" y="57.5" width="237.2" height="332" fill="#ffffff" />
<g clip-path="url(#doc)">
<circle cx="275.5" cy="179.5" r="37.5" fill="none" stroke="#1a1a1a" stroke-width="1.2" filter="url(#rough)"/>
<circle cx="341.5" cy="181.5" r="35.6" fill="none" stroke="#1a1a1a" stroke-width="1.5" filter="url(#rough)"/>
<ellipse cx="388.8" cy="227" rx="35.4" ry="37" fill="none" stroke="#1a1a1a" stroke-width="1.9" filter="url(#rough)"/>
<circle cx="322" cy="229" r="32" fill="none" stroke="#1a1a1a" stroke-width="1.5" filter="url(#rough)"/>
<circle cx="355.5" cy="271.3" r="29.4" fill="none" stroke="#1a1a1a" stroke-width="1.9" filter="url(#rough)"/>
<circle cx="306" cy="279.5" r="27.5" fill="none" stroke="#1a1a1a" stroke-width="1.5" filter="url(#rough)"/>
<circle cx="304.6" cy="326.8" r="24.9" fill="none" stroke="#1a1a1a" stroke-width="1.5" filter="url(#rough)"/>
<circle cx="254.5" cy="389.5" r="18.5" fill="none" stroke="#1a1a1a" stroke-width="1.5" filter="url(#rough)"/>
<circle cx="264" cy="292.5" r="28.5" fill="none" stroke="#1a1a1a" stroke-width="1.5" filter="url(#rough)"/>
<ellipse cx="342" cy="138.6" rx="22.6" ry="29" fill="none" stroke="#1a1a1a" stroke-width="1.2" filter="url(#rough)"/>
<path d="M340,62.6 L352,66 L371.2,70.4 L371,71.6 L356,69.8 L341,64.4 Z" fill="#3d1212" stroke="#3d1212" stroke-width="0.5" stroke-linejoin="round"/>
<path d="M344.2,61 L355,65.2 L367.7,68.2" fill="none" stroke="#151010" stroke-width="1.4" stroke-linecap="round"/>
<path d="M352.9,67 L357,69.4 L354.6,82 L351.6,96 L348.6,110 L344,110 L347.6,97 L350.6,84 Z" fill="#3d1212" stroke="#3d1212" stroke-width="0.4" stroke-linejoin="round"/>
<ellipse cx="340.2" cy="137.6" rx="22.3" ry="29" fill="#3d1212"/>
<circle cx="271" cy="177.3" r="36.6" fill="#3d1212"/>
<circle cx="339" cy="180" r="35" fill="#f7d6bd"/>
<circle cx="404.1" cy="150.7" r="44.1" fill="#3d1212"/>
<circle cx="267.6" cy="238.4" r="25.3" fill="#dca56b"/>
<circle cx="389.3" cy="223.7" r="35.9" fill="#dca56b"/>
<circle cx="320.7" cy="227.1" r="32.2" fill="#3d1212"/>
<circle cx="308.3" cy="277.3" r="28" fill="#f7d6bd"/>
<circle cx="357.9" cy="268.8" r="28.5" fill="#3d1212"/>
<circle cx="263.2" cy="291.7" r="28.5" fill="#3d1212"/>
<circle cx="258" cy="339.2" r="23.2" fill="#f7d6bd"/>
<circle cx="305.3" cy="325.7" r="24.2" fill="#dca56b"/>
<circle cx="232.3" cy="362.3" r="18.7" fill="#dca56b"/>
<circle cx="252.2" cy="390.5" r="18.2" fill="#3d1212"/>
</g>
<path d="M216,77.5 L282.8,79.8 L280.1,109.2 L217.5,108.3 Z" fill="none" stroke="#1a1a1a" stroke-width="1.5" stroke-linecap="round" stroke-linejoin="round" filter="url(#rough)"/>
<path d="M216,77.5 L280.1,109.2 M282.8,79.8 L217.5,108.3" fill="none" stroke="#1a1a1a" stroke-width="0.8" stroke-linecap="round" stroke-linejoin="round" filter="url(#rough)"/>
<path d="M219.4,113.4 L296,113 C298,113.4 298,118.6 296,119 L219.4,119.3 C217.6,118.8 217.6,113.8 219.4,113.4 Z" fill="none" stroke="#1a1a1a" stroke-width="1.5" stroke-linecap="round" stroke-linejoin="round" filter="url(#rough)"/>
<path d="M373.3,77 L426.4,76.6 L425.6,92.6 L373.8,92.6 Z" fill="none" stroke="#1a1a1a" stroke-width="1.5" stroke-linecap="round" stroke-linejoin="round" filter="url(#rough)"/>
<path d="M373.3,323 L416,322 L412.8,370 L371.7,370.9 Z" fill="none" stroke="#1a1a1a" stroke-width="1.6" stroke-linecap="round" stroke-linejoin="round" filter="url(#rough)"/>
<path d="M373.3,323 L412.8,370 M416,322 L371.7,370.9" fill="none" stroke="#1a1a1a" stroke-width="1.0" stroke-linecap="round" stroke-linejoin="round" filter="url(#rough)"/>
<text x="227.5" y="99.6" font-size="15.4" fill="#111" stroke="#111" stroke-width="0.35" textLength="36.5" lengthAdjust="spacingAndGlyphs" transform="rotate(1.5 227.5 99.6)" style="font-family:'DejaVu Sans', 'Liberation Sans', sans-serif">TITLE</text>
<text x="224.9" y="133" font-size="11.3" fill="#111" stroke="#111" stroke-width="0.3" textLength="44.6" lengthAdjust="spacing" transform="rotate(0 224.9 133)" style="font-family:'DejaVu Sans', 'Liberation Sans', sans-serif">subtille</text>
<text x="378.5" y="86.8" font-size="10.2" fill="#111" stroke="#111" stroke-width="0.15" textLength="38" lengthAdjust="spacing" transform="rotate(0 378.5 86.8)" style="font-family:'DejaVu Sans', 'Liberation Sans', sans-serif">social</text>
<text x="380" y="346" font-size="8.6" fill="#111" stroke="#111" stroke-width="0.3" textLength="28" lengthAdjust="spacing" transform="rotate(0 380 346)" style="font-family:'DejaVu Sans', 'Liberation Sans', sans-serif"><tspan font-size="13">L</tspan>OGO</text>
<path d="M226.9,119.4 L227,125.6" fill="none" stroke="#1a1a1a" stroke-width="1.1" stroke-linecap="round" stroke-linejoin="round" filter="url(#rough)"/>
<rect x="16.5" y="405.8" width="600" height="6.6" fill="#e6e6e6" />
<rect x="616" y="41.3" width="6.5" height="371" fill="#e3e3e3" />
<rect x="16.5" y="405.8" width="22" height="6.6" fill="#ffffff" />
<text x="21.3" y="410.6" font-size="3.7" fill="#444" text-anchor="start" font-weight="normal" textLength="14" lengthAdjust="spacingAndGlyphs" >66.67%</text>
<rect x="38.6" y="405.8" width="72.5" height="6.6" fill="#f2f2f2" />
<text x="47" y="410.6" font-size="3.7" fill="#555" text-anchor="start" font-weight="normal" textLength="51.5" lengthAdjust="spacingAndGlyphs" >1816 px x 2551 px (300 ppi)</text>
<text x="107.4" y="410.7" font-size="4.6" fill="#444" text-anchor="start" font-weight="normal" >›</text>
<rect x="253.4" y="406.6" width="221.4" height="4.8" rx="2.4" fill="#c6c6c6"/>
<rect x="0" y="8.3" width="16.5" height="404.2" fill="#f0f0f0" />
<rect x="0" y="8.3" width="1.2" height="404.2" fill="#4f4163" />
<rect x="16.2" y="22.5" width="0.4" height="390" fill="#d0d0d0" />
<rect x="1.4" y="22.6" width="15" height="3.6" fill="#d9d9d9" />
<rect x="3" y="23.9" width="3" height="0.7" fill="#777" />
<rect x="3.5" y="29.3" width="10" height="0.5" fill="#d6d6d6" />
<g transform="translate(8,38.4) scale(0.78)">
<path d="M0,-3.8 L0,3.8 M-3.8,0 L3.8,0" fill="none" stroke="#2b2b2b" stroke-width="0.8" stroke-linecap="round" stroke-linejoin="round" />
<path d="M-1.2,-2.8 L0,-4.2 L1.2,-2.8 Z M-1.2,2.8 L0,4.2 L1.2,2.8 Z M-2.8,-1.2 L-4.2,0 L-2.8,1.2 Z M2.8,-1.2 L4.2,0 L2.8,1.2 Z" fill="#2b2b2b" stroke="#2b2b2b" stroke-width="0.3" stroke-linecap="round" stroke-linejoin="round" />
</g>
<path d="M13.6,41.6 L13.6,43.0 L12.2,43.0 Z" fill="#444"/>
<g transform="translate(8,48.9) scale(0.78)">
<rect x="-3.6" y="-3" width="7.2" height="6" fill="none" stroke="#2b2b2b" stroke-width="0.7" stroke-dasharray="1.3,0.8"/>
</g>
<path d="M13.6,52.1 L13.6,53.5 L12.2,53.5 Z" fill="#444"/>
<g transform="translate(8,58.7) scale(0.78)">
<ellipse cx="0.3" cy="-0.8" rx="3.6" ry="2.5" fill="none" stroke="#2b2b2b" stroke-width="0.8" transform="rotate(-12)"/>
<path d="M-2.6,1 C-3.6,2 -2.6,3.4 -3.4,4" fill="none" stroke="#2b2b2b" stroke-width="0.7" stroke-linecap="round" stroke-linejoin="round" />
</g>
<path d="M13.6,61.900000000000006 L13.6,63.300000000000004 L12.2,63.300000000000004 Z" fill="#444"/>
<g transform="translate(8,68.8) scale(0.78)">
<rect x="-1" y="-1" width="4.6" height="4.6" fill="none" stroke="#2b2b2b" stroke-width="0.6" stroke-dasharray="1,0.7"/>
<path d="M-3.6,-3.8 L-3.6,1.4 L-2.2,0.2 L-1.2,2.4 L-0.2,2 L-1.2,-0.2 L0.6,-0.4 Z" fill="#2b2b2b" stroke="#2b2b2b" stroke-width="0.3" stroke-linecap="round" stroke-linejoin="round" />
</g>
<path d="M13.6,72.0 L13.6,73.39999999999999 L12.2,73.39999999999999 Z" fill="#444"/>
<g transform="translate(8,79.2) scale(0.78)">
<path d="M-2,-4 L-2,2 L4,2 M-4,-2 L2,-2 L2,4" fill="none" stroke="#2b2b2b" stroke-width="0.9" stroke-linecap="round" stroke-linejoin="round" />
</g>
<path d="M13.6,82.4 L13.6,83.8 L12.2,83.8 Z" fill="#444"/>
<g transform="translate(8,89) scale(0.78)">
<rect x="-3.6" y="-3" width="7.2" height="6" fill="none" stroke="#2b2b2b" stroke-width="0.8"/>
<path d="M-3.6,-3 L3.6,3 M3.6,-3 L-3.6,3" fill="none" stroke="#2b2b2b" stroke-width="0.6" stroke-linecap="round" stroke-linejoin="round" />
</g>
<g transform="translate(8,99.7) scale(0.78)">
<path d="M-3.6,3.8 L-3,2 L0.6,-1.6 L1.8,-0.4 L-1.8,3.2 Z" fill="#2b2b2b" stroke="#2b2b2b" stroke-width="0.4" stroke-linecap="round" stroke-linejoin="round" />
<path d="M0.4,-2.6 L2.8,-0.2" fill="none" stroke="#2b2b2b" stroke-width="1.1" stroke-linecap="round" stroke-linejoin="round" />
<path d="M1.6,-1.4 L3.2,-3" fill="none" stroke="#2b2b2b" stroke-width="1.9" stroke-linecap="round" stroke-linejoin="round" />
</g>
<path d="M13.6,102.9 L13.6,104.3 L12.2,104.3 Z" fill="#444"/>
<g transform="translate(8,109) scale(0.78)">
<rect x="-4.2" y="-1.8" width="8.4" height="3.6" rx="1.8" fill="none" stroke="#2b2b2b" stroke-width="0.8" transform="rotate(-45)"/>
<rect x="-1.2" y="-1.8" width="2.4" height="3.6" fill="#2b2b2b" opacity="0.6" transform="rotate(-45)"/>
</g>
<path d="M13.6,112.2 L13.6,113.6 L12.2,113.6 Z" fill="#444"/>
<g transform="translate(8,119.5) scale(0.78)">
<path d="M3.6,-3.8 L-0.4,0.6" fill="none" stroke="#2b2b2b" stroke-width="1.3" stroke-linecap="round" stroke-linejoin="round" />
<path d="M-1,0.4 C-2.6,0.6 -2.2,2.6 -4,3.6 C-2,4 -0.2,3 0.2,1.4 Z" fill="#2b2b2b" stroke="#2b2b2b" stroke-width="0.3" stroke-linecap="round" stroke-linejoin="round" />
</g>
<path d="M13.6,122.7 L13.6,124.1 L12.2,124.1 Z" fill="#444"/>
<g transform="translate(8,129.8) scale(0.78)">
<path d="M-3.6,3.6 L3.6,3.6" fill="none" stroke="#2b2b2b" stroke-width="0.9" stroke-linecap="round" stroke-linejoin="round" />
<path d="M-3.4,2.2 L-3.4,0.6 L-0.9,0.6 C-0.9,-0.6 -1.7,-1.2 -1.7,-2.4 C-1.7,-3.5 -0.8,-4 0,-4 C0.8,-4 1.7,-3.5 1.7,-2.4 C1.7,-1.2 0.9,-0.6 0.9,0.6 L3.4,0.6 L3.4,2.2 Z" fill="#2b2b2b" stroke="#2b2b2b" stroke-width="0.3" stroke-linecap="round" stroke-linejoin="round" />
</g>
<path d="M13.6,133.0 L13.6,134.4 L12.2,134.4 Z" fill="#444"/>
<g transform="translate(8,140.2) scale(0.78)">
<path d="M3.8,-3.8 L0,0.4" fill="none" stroke="#2b2b2b" stroke-width="1.2" stroke-linecap="round" stroke-linejoin="round" />
<path d="M-0.6,0.4 C-2.2,0.6 -1.8,2.6 -3.6,3.6 C-1.6,4 0.2,3 0.6,1.4 Z" fill="#2b2b2b" stroke="#2b2b2b" stroke-width="0.3" stroke-linecap="round" stroke-linejoin="round" />
<path d="M-4,-1.4 C-3.8,-3.4 -1.6,-4.2 0,-3.2" fill="none" stroke="#2b2b2b" stroke-width="0.7" stroke-linecap="round" stroke-linejoin="round" />
<path d="M-4.4,-2.6 L-4,-1.2 L-2.8,-1.8" fill="none" stroke="#2b2b2b" stroke-width="0.6" stroke-linecap="round" stroke-linejoin="round" />
</g>
<path d="M13.6,143.39999999999998 L13.6,144.79999999999998 L12.2,144.79999999999998 Z" fill="#444"/>
<g transform="translate(8,150.2) scale(0.78)">
<path d="M-3.8,1.2 L0.4,-3.2 L3.8,-0.4 L0.2,3.4 L-1.8,3.4 Z" fill="none" stroke="#2b2b2b" stroke-width="0.8" stroke-linecap="round" stroke-linejoin="round" />
<path d="M-1.6,-1.2 L0.4,-3.2 L3.8,-0.4 L1.8,1.6 Z" fill="#2b2b2b" stroke="#2b2b2b" stroke-width="0.4" stroke-linecap="round" stroke-linejoin="round" />
<path d="M-2.8,3.6 L3.6,3.6" fill="none" stroke="#2b2b2b" stroke-width="0.6" stroke-linecap="round" stroke-linejoin="round" />
</g>
<path d="M13.6,153.39999999999998 L13.6,154.79999999999998 L12.2,154.79999999999998 Z" fill="#444"/>
<g transform="translate(8,160.7) scale(0.78)">
<linearGradient id="tg" x1="0" x2="1"><stop offset="0" stop-color="#222"/><stop offset="1" stop-color="#eee"/></linearGradient>
<rect x="-3.6" y="-3.2" width="7.2" height="6.4" fill="url(#tg)" stroke="#2b2b2b" stroke-width="0.6"/>
</g>
<path d="M13.6,163.89999999999998 L13.6,165.29999999999998 L12.2,165.29999999999998 Z" fill="#444"/>
<g transform="translate(8,170.7) scale(0.78)">
<path d="M0,-4 C1,-2 2.8,-0.4 2.8,1.4 C2.8,3 1.4,4 0,4 C-1.4,4 -2.8,3 -2.8,1.4 C-2.8,-0.4 -1,-2 0,-4 Z" fill="none" stroke="#2b2b2b" stroke-width="0.8" stroke-linecap="round" stroke-linejoin="round" />
</g>
<path d="M13.6,173.89999999999998 L13.6,175.29999999999998 L12.2,175.29999999999998 Z" fill="#444"/>
<g transform="translate(8,181) scale(0.78)">
<circle cx="0.8" cy="-1" r="2.7" fill="#2b2b2b"/>
<path d="M-1,1.2 L-3.2,3.8" fill="none" stroke="#2b2b2b" stroke-width="1.3" stroke-linecap="round" stroke-linejoin="round" />
</g>
<path d="M13.6,184.2 L13.6,185.6 L12.2,185.6 Z" fill="#444"/>
<g transform="translate(8,190.8) scale(0.78)">
<path d="M-3.8,3.8 L-2.4,-0.6 L1,-3.2 L3.4,-0.8 L0.8,2.6 Z" fill="none" stroke="#2b2b2b" stroke-width="0.8" stroke-linecap="round" stroke-linejoin="round" />
<path d="M-3.8,3.8 L-0.6,0.6" fill="none" stroke="#2b2b2b" stroke-width="0.6" stroke-linecap="round" stroke-linejoin="round" />
<path d="M1.2,-4 L4,-1.2" fill="none" stroke="#2b2b2b" stroke-width="1.1" stroke-linecap="round" stroke-linejoin="round" />
</g>
<path d="M13.6,194.0 L13.6,195.4 L12.2,195.4 Z" fill="#444"/>
<rect x="2" y="195.4" width="12.4" height="10.8" fill="#cbcbcb" />
<text x="8.2" y="203.5" font-size="8.4" text-anchor="middle" fill="#222" style="font-family:'Liberation Serif',serif">T</text>
<path d="M13.6,203.89999999999998 L13.6,205.29999999999998 L12.2,205.29999999999998 Z" fill="#444"/>
<g transform="translate(8,211.3) scale(0.78)">
<path d="M-2.4,-4.4 L-2.4,3.2 L-0.6,1.6 L0.8,4.4 L2,3.8 L0.7,1.1 L3.2,0.9 Z" fill="#111" stroke="#111" stroke-width="0.3" stroke-linecap="round" stroke-linejoin="round" />
</g>
<path d="M13.6,214.5 L13.6,215.9 L12.2,215.9 Z" fill="#444"/>
<g transform="translate(8,221.3) scale(0.78)">
<ellipse cx="0" cy="0" rx="3.9" ry="3" fill="none" stroke="#2b2b2b" stroke-width="0.8"/>
</g>
<path d="M13.6,224.5 L13.6,225.9 L12.2,225.9 Z" fill="#444"/>
<g transform="translate(8,231.8) scale(0.78)">
<path d="M-1.8,0.2 L-1.8,-2.8 M-0.4,-0.4 L-0.4,-3.8 M1,-0.4 L1,-3.4 M2.4,0.2 L2.4,-2.2" fill="none" stroke="#2b2b2b" stroke-width="0.9" stroke-linecap="round" stroke-linejoin="round" />
<path d="M-1.8,0 L-3.4,-1 C-3.8,0.6 -2.6,2.6 -1.4,3.8 L2,3.8 C2.8,2.6 3,1.2 3,-0.4" fill="none" stroke="#2b2b2b" stroke-width="0.8" stroke-linecap="round" stroke-linejoin="round" />
</g>
<path d="M13.6,235.0 L13.6,236.4 L12.2,236.4 Z" fill="#444"/>
<g transform="translate(8,241.7) scale(0.78)">
<circle cx="-0.8" cy="-0.9" r="2.6" fill="none" stroke="#2b2b2b" stroke-width="0.9"/>
<path d="M1.2,1.1 L3.8,3.8" fill="none" stroke="#2b2b2b" stroke-width="1.3" stroke-linecap="round" stroke-linejoin="round" />
</g>
<g transform="translate(8,252) scale(0.78)">
<circle cx="-3" cy="0" r="1" fill="#2b2b2b"/><circle cx="0" cy="0" r="1" fill="#2b2b2b"/><circle cx="3" cy="0" r="1" fill="#2b2b2b"/>
</g>
<path d="M13.6,255.2 L13.6,256.6 L12.2,256.6 Z" fill="#444"/>
<rect x="2.6" y="258.6" width="2.6" height="2.6" fill="#111" />
<rect x="4.1" y="260.1" width="2.6" height="2.6" fill="#fff" stroke="#111" stroke-width="0.4"/>
<path d="M10,258.8 C12,258.6 12.8,259.6 12.8,261.6" fill="none" stroke="#2b2b2b" stroke-width="0.6" stroke-linecap="round" stroke-linejoin="round" />
<path d="M9.6,258 L9.6,259.8 L11,258.9 Z M12,261 L13.6,261 L12.8,262.4 Z" fill="#2b2b2b" stroke="#2b2b2b" stroke-width="0.2" stroke-linecap="round" stroke-linejoin="round" />
<rect x="6.2" y="270" width="7.3" height="6.6" fill="#f7d6bd" stroke="#999" stroke-width="0.4"/>
<rect x="2.3" y="265.3" width="6.4" height="6.7" fill="#3a0808" stroke="#ddd" stroke-width="0.4"/>
<g transform="translate(8,283.7) scale(0.78)">
<rect x="-3.8" y="-2.8" width="7.6" height="5.6" fill="none" stroke="#2b2b2b" stroke-width="0.7"/><ellipse cx="0" cy="0" rx="1.9" ry="1.6" fill="none" stroke="#2b2b2b" stroke-width="0.5" stroke-dasharray="0.8,0.5"/>
</g>
<g transform="translate(8,293.6) scale(0.78)">
<rect x="-2.6" y="-3.2" width="6.4" height="4.6" fill="#f0f0f0" stroke="#2b2b2b" stroke-width="0.7"/><rect x="-3.9" y="-1.6" width="6.4" height="4.6" fill="#f0f0f0" stroke="#2b2b2b" stroke-width="0.7"/>
</g>
<path d="M13.6,296.8 L13.6,298.20000000000005 L12.2,298.20000000000005 Z" fill="#444"/>
<rect x="15.2" y="196.8" width="74" height="30.4" fill="#000" opacity="0.35" filter="url(#sh)"/>
<rect x="14.7" y="196.3" width="74" height="30" fill="#e9e9e9" />
<rect x="14.7" y="196.3" width="74" height="7.7" fill="#bdbdbd" />
<rect x="17.2" y="199.5" width="1.4" height="1.4" fill="#222" />
<text x="26.4" y="203.0" font-size="8" text-anchor="middle" fill="#222" style="font-family:'Liberation Serif',serif">T</text>
<text x="30.4" y="201.70000000000002" font-size="4.1" fill="#222" text-anchor="start" font-weight="normal" textLength="38.9" lengthAdjust="spacingAndGlyphs" >Horizontal Type Tool</text>
<text x="84" y="201.70000000000002" font-size="4.1" fill="#444" text-anchor="start" font-weight="normal" >T</text>
<text x="26.4" y="210.7" font-size="8" text-anchor="middle" fill="#222" style="font-family:'Liberation Serif',serif">T</text>
<text x="30.4" y="209.4" font-size="4.1" fill="#333" text-anchor="start" font-weight="normal" textLength="34" lengthAdjust="spacingAndGlyphs" >Vertical Type Tool</text>
<text x="84" y="209.4" font-size="4.1" fill="#444" text-anchor="start" font-weight="normal" >T</text>
<text x="25.2" y="217.8" font-size="7.6" text-anchor="middle" fill="none" stroke="#777" stroke-width="0.35" stroke-dasharray="0.7,0.5" style="font-family:'Liberation Serif',serif">T</text>
<text x="30.4" y="216.8" font-size="4.1" fill="#333" text-anchor="start" font-weight="normal" textLength="44.3" lengthAdjust="spacingAndGlyphs" >Vertical Type Mask Tool</text>
<text x="84" y="216.8" font-size="4.1" fill="#444" text-anchor="start" font-weight="normal" >T</text>
<text x="27" y="225.1" font-size="7.6" text-anchor="middle" fill="none" stroke="#777" stroke-width="0.35" stroke-dasharray="0.7,0.5" style="font-family:'Liberation Serif',serif">T</text>
<text x="30.4" y="224.1" font-size="4.1" fill="#333" text-anchor="start" font-weight="normal" textLength="49.3" lengthAdjust="spacingAndGlyphs" >Horizontal Type Mask Tool</text>
<text x="84" y="224.1" font-size="4.1" fill="#444" text-anchor="start" font-weight="normal" >T</text>
<path d="M22.2,206.6 L22.2,210 M21.4,209.2 L22.2,210.2 L23,209.2" fill="none" stroke="#2b2b2b" stroke-width="0.45" stroke-linecap="round" stroke-linejoin="round" />
<path d="M21.6,214 L21.6,217.6" fill="none" stroke="#777" stroke-width="0.4" stroke-linecap="round" stroke-linejoin="round" />
<circle cx="66" cy="201" r="7.5" fill="none" stroke="#3d9ae8" stroke-opacity="0.92" stroke-width="3.3"/>
<path d="M65.6,201.4 L65.6,207.6 L67,206.4 L68.1,208.8 L69.2,208.3 L68.1,206 L70,205.8 Z" fill="#111" stroke="#fff" stroke-width="0.3"/>
<path d="M8.5,16 L11.2,13.4 L13.9,16 L13.2,16 L13.2,18.3 L11.9,18.3 L11.9,16.7 L10.5,16.7 L10.5,18.3 L9.2,18.3 L9.2,16 Z" fill="#1d1d1d" stroke="#1d1d1d" stroke-width="0.5" stroke-linecap="round" stroke-linejoin="round" />
<rect x="19.4" y="10.5" width="0.4" height="10.5" fill="#dadada" />
<text x="28.2" y="18.7" font-size="8.6" text-anchor="middle" fill="#2a2a2a" style="font-family:'Liberation Serif',serif">T</text>
<path d="M34.6,15.6 L35.8,16.8 L37,15.6" fill="none" stroke="#555" stroke-width="0.6" stroke-linecap="round" stroke-linejoin="round" />
<rect x="41.4" y="10.5" width="0.4" height="10.5" fill="#dadada" />
<text x="50.4" y="17.6" font-size="6.6" text-anchor="middle" fill="#777" style="font-family:'Liberation Serif',serif">T</text>
<path d="M46.6,12.6 L46.6,17.8 M45.8,17 L46.6,18 L47.4,17 M47.8,18.6 L52.8,18.6 M52,17.9 L53,18.6 L52,19.3" fill="none" stroke="#777" stroke-width="0.45" stroke-linecap="round" stroke-linejoin="round" />
<rect x="59.4" y="12.6" width="62" height="7.2" rx="1.1" fill="#fbfbfb" stroke="#dcdcdc" stroke-width="0.45"/>
<path d="M113.2,12.9 L113.2,19.5" stroke="#e2e2e2" stroke-width="0.4"/>
<path d="M116.10000000000001,15.6 L117.30000000000001,16.8 L118.5,15.6" fill="none" stroke="#555" stroke-width="0.6" stroke-linecap="round" stroke-linejoin="round" />
<text x="62" y="17.7" font-size="3.9" fill="#444" text-anchor="start" font-weight="normal" textLength="10.6" lengthAdjust="spacingAndGlyphs" >Anton</text>
<rect x="125" y="12.6" width="61.4" height="7.2" rx="1.1" fill="#fbfbfb" stroke="#dcdcdc" stroke-width="0.45"/>
<path d="M178.20000000000002,12.9 L178.20000000000002,19.5" stroke="#e2e2e2" stroke-width="0.4"/>
<path d="M181.1,15.6 L182.3,16.8 L183.5,15.6" fill="none" stroke="#555" stroke-width="0.6" stroke-linecap="round" stroke-linejoin="round" />
<text x="127.4" y="17.7" font-size="3.9" fill="#444" text-anchor="start" font-weight="normal" textLength="13.6" lengthAdjust="spacingAndGlyphs" >Regular</text>
<text x="196.8" y="18.8" font-size="7.4" text-anchor="middle" fill="#333" style="font-family:'Liberation Serif',serif">T</text>
<text x="193.4" y="18.8" font-size="4.4" text-anchor="middle" fill="#333" style="font-family:'Liberation Serif',serif">T</text>
<rect x="202.4" y="12.6" width="29.6" height="7.2" rx="1.1" fill="#fbfbfb" stroke="#dcdcdc" stroke-width="0.45"/>
<path d="M223.8,12.9 L223.8,19.5" stroke="#e2e2e2" stroke-width="0.4"/>
<path d="M226.7,15.6 L227.9,16.8 L229.1,15.6" fill="none" stroke="#555" stroke-width="0.6" stroke-linecap="round" stroke-linejoin="round" />
<text x="204.6" y="17.7" font-size="3.9" fill="#444" text-anchor="start" font-weight="normal" textLength="8.6" lengthAdjust="spacingAndGlyphs" >72 pt</text>
<text x="237.4" y="17.7" font-size="4.6" fill="#444" text-anchor="start" font-weight="normal" >a</text>
<text x="239.8" y="18.4" font-size="3.6" fill="#444" text-anchor="start" font-weight="normal" >a</text>
<rect x="247.8" y="12.6" width="26.2" height="7.2" rx="1.1" fill="#fbfbfb" stroke="#dcdcdc" stroke-width="0.45"/>
<path d="M265.8,12.9 L265.8,19.5" stroke="#e2e2e2" stroke-width="0.4"/>
<path d="M268.7,15.6 L269.9,16.8 L271.1,15.6" fill="none" stroke="#555" stroke-width="0.6" stroke-linecap="round" stroke-linejoin="round" />
<text x="250.6" y="17.7" font-size="3.9" fill="#444" text-anchor="start" font-weight="normal" textLength="10.4" lengthAdjust="spacingAndGlyphs" >Sharp</text>
<rect x="278.6" y="11.2" width="9.8" height="9.8" rx="0.8" fill="#cfcfcf" stroke="#b4b4b4" stroke-width="0.5"/>
<rect x="280.6" y="12.9" width="5.8" height="0.6" fill="#333" />
<rect x="280.6" y="14.15" width="4" height="0.6" fill="#333" />
<rect x="280.6" y="15.4" width="5.8" height="0.6" fill="#333" />
<rect x="280.6" y="16.65" width="4" height="0.6" fill="#333" />
<rect x="280.6" y="17.9" width="5.8" height="0.6" fill="#333" />
<rect x="291.2" y="12.9" width="5.8" height="0.6" fill="#555" />
<rect x="292.1" y="14.15" width="4" height="0.6" fill="#555" />
<rect x="291.2" y="15.4" width="5.8" height="0.6" fill="#555" />
<rect x="292.1" y="16.65" width="4" height="0.6" fill="#555" />
<rect x="291.2" y="17.9" width="5.8" height="0.6" fill="#555" />
<rect x="301.2" y="12.9" width="5.8" height="0.6" fill="#555" />
<rect x="303.0" y="14.15" width="4" height="0.6" fill="#555" />
<rect x="301.2" y="15.4" width="5.8" height="0.6" fill="#555" />
<rect x="303.0" y="16.65" width="4" height="0.6" fill="#555" />
<rect x="301.2" y="17.9" width="5.8" height="0.6" fill="#555" />
<rect x="313.7" y="11.7" width="11.4" height="7.6" fill="#3a0a0a" stroke="#888" stroke-width="0.4"/>
<text x="335" y="18.6" font-size="7" text-anchor="middle" fill="#8a8a8a" style="font-family:'Liberation Serif',serif">T</text>
<path d="M331.4,19.6 C333.6,18.2 336.4,18.2 338.6,19.6" fill="none" stroke="#8a8a8a" stroke-width="0.5" stroke-linecap="round" stroke-linejoin="round" />
<rect x="347.6" y="12" width="6.8" height="7.4" rx="0.6" fill="none" stroke="#444" stroke-width="0.7"/>
<rect x="348.8" y="13.4" width="1.6" height="4.6" fill="#666" />
<rect x="351" y="13.4" width="2.4" height="0.6" fill="#666" />
<rect x="351" y="15" width="2.4" height="0.6" fill="#666" />
<rect x="351" y="16.6" width="2.4" height="0.6" fill="#666" />
<rect x="698" y="11.2" width="21.3" height="9.3" rx="4.65" fill="#1473e6"/>
<text x="702.4" y="17.5" font-size="4.2" fill="#ffffff" text-anchor="start" font-weight="bold" textLength="12.6" lengthAdjust="spacingAndGlyphs" >Share</text>
<circle cx="725.6" cy="15.2" r="2.3" fill="none" stroke="#444" stroke-width="0.8"/>
<path d="M727.3,17 L729.2,19" fill="none" stroke="#444" stroke-width="0.9" stroke-linecap="round" stroke-linejoin="round" />
<rect x="735" y="12.6" width="6.4" height="5.6" fill="none" stroke="#555" stroke-width="0.7"/>
<rect x="736.6" y="14" width="4.6" height="4" fill="#ddd" />
<path d="M735,14.2 L741.4,14.2 M736.8,14.2 L736.8,18.2" fill="none" stroke="#555" stroke-width="0.5" stroke-linecap="round" stroke-linejoin="round" />
<path d="M745.2,15 L746.4,16.2 L747.6,15" fill="none" stroke="#777" stroke-width="0.55" stroke-linecap="round" stroke-linejoin="round" />
<rect x="622.5" y="22.5" width="127.5" height="390" fill="#f0f0f0" />
<rect x="622.5" y="22.5" width="16" height="390" fill="#ececec" />
<rect x="622.3" y="22.5" width="0.4" height="390" fill="#cfcfcf" />
<rect x="638.3" y="22.5" width="0.5" height="390" fill="#d2d2d2" />
<rect x="622.5" y="22.5" width="127.5" height="4.2" fill="#dedede" />
<rect x="628.6" y="24" width="2.6" height="0.6" fill="#777" />
<rect x="744" y="24" width="2.6" height="0.6" fill="#777" />
<rect x="624.6" y="30.6" width="11.6" height="10.6" fill="#cdcdcd" />
<path d="M630.5,32.199999999999996 L634.1,34.199999999999996 L630.5,36.199999999999996 L626.9,34.199999999999996 Z" fill="#222" stroke="#222" stroke-width="0.3" stroke-linecap="round" stroke-linejoin="round" />
<path d="M626.9,35.8 L630.5,37.8 L634.1,35.8" fill="none" stroke="#222" stroke-width="0.8" stroke-linecap="round" stroke-linejoin="round" />
<path d="M626.9,37.3 L630.5,39.3 L634.1,37.3" fill="none" stroke="#222" stroke-width="0.8" stroke-linecap="round" stroke-linejoin="round" />
<g transform="translate(630.5,46.6) scale(1)">
<rect x="-3.4" y="-3.4" width="2.2" height="1.6" fill="#2b2b2b" />
<rect x="-3.4" y="-0.8" width="2.2" height="1.6" fill="#2b2b2b" />
<rect x="-3.4" y="1.8" width="2.2" height="1.6" fill="#2b2b2b" />
<path d="M0.4,-3 C3.4,-2.6 3.6,1.6 0.8,2.8" fill="none" stroke="#2b2b2b" stroke-width="0.8" stroke-linecap="round" stroke-linejoin="round" />
<path d="M0.2,1.6 L0.6,3.2 L2.2,2.8" fill="none" stroke="#2b2b2b" stroke-width="0.6" stroke-linecap="round" stroke-linejoin="round" />
</g>
<path d="M628,54.6 L633.6,57.5 L628,60.4 Z" fill="#2b2b2b" stroke="#2b2b2b" stroke-width="0.3" stroke-linecap="round" stroke-linejoin="round" />
<path d="M627.6,66.2 L633.6,66.2 L633.6,70.4 L630.8,70.4 L629.4,72 L629.4,70.4 L627.6,70.4 Z" fill="#2b2b2b" stroke="#2b2b2b" stroke-width="0.4" stroke-linecap="round" stroke-linejoin="round" />
<rect x="626" y="76.4" width="9" height="0.4" fill="#cfcfcf" />
<text x="627.2" y="87.4" font-size="7.2" fill="#222" text-anchor="start" font-weight="normal" >A</text>
<rect x="633.2" y="81.6" width="0.55" height="6.6" fill="#444" />
<text x="627.8" y="98.2" font-size="7" fill="#222" text-anchor="start" font-weight="bold" >¶</text>
<rect x="626" y="104" width="9" height="0.4" fill="#d4d4d4" />
<rect x="638.8" y="26.7" width="111.2" height="11.8" fill="#e0e0e0" />
<rect x="638.8" y="26.7" width="18.4" height="11.8" fill="#f0f0f0" />
<text x="642.2" y="34.2" font-size="4.3" fill="#222" text-anchor="start" font-weight="bold" textLength="11" lengthAdjust="spacingAndGlyphs" >Color</text>
<text x="660.6" y="34.2" font-size="4.3" fill="#666" text-anchor="start" font-weight="normal" textLength="18.4" lengthAdjust="spacingAndGlyphs" >Swatches</text>
<text x="686.6" y="34.2" font-size="4.3" fill="#666" text-anchor="start" font-weight="normal" textLength="19.4" lengthAdjust="spacingAndGlyphs" >Gradients</text>
<text x="713.4" y="34.2" font-size="4.3" fill="#666" text-anchor="start" font-weight="normal" textLength="17" lengthAdjust="spacingAndGlyphs" >Patterns</text>
<rect x="657.4" y="27.6" width="0.4" height="10" fill="#d0d0d0" />
<rect x="682.6" y="27.6" width="0.4" height="10" fill="#d0d0d0" />
<rect x="709" y="27.6" width="0.4" height="10" fill="#d0d0d0" />
<rect x="734" y="27.6" width="0.4" height="10" fill="#d0d0d0" />
<rect x="743.6" y="31.4" width="3.6" height="0.5" fill="#666" />
<rect x="743.6" y="32.5" width="3.6" height="0.5" fill="#666" />
<rect x="743.6" y="33.6" width="3.6" height="0.5" fill="#666" />
<rect x="743.6" y="34.699999999999996" width="3.6" height="0.5" fill="#666" />
<rect x="656.6" y="40.7" width="73" height="106.8" fill="url(#gw)" />
<rect x="656.6" y="40.7" width="73" height="106.8" fill="url(#gb)" />
<rect x="736.7" y="40.7" width="6.8" height="106.8" fill="url(#hue)" />
<circle cx="725.5" cy="123.5" r="2" fill="none" stroke="#fff" stroke-width="0.7"/>
<path d="M733.4,146.2 L735.2,147.4 L733.4,148.6 Z" fill="#fff" stroke="#999" stroke-width="0.3" stroke-linecap="round" stroke-linejoin="round" />
<rect x="646.8" y="46.4" width="7.2" height="6.6" fill="#f7d6bd" stroke="#888" stroke-width="0.4"/>
<rect x="643" y="42.6" width="7.4" height="6.6" fill="#3a0808" stroke="#333" stroke-width="0.5"/>
<path d="M642.6,65 L644.6,61 L646.6,65 Z" fill="#333" stroke="#333" stroke-width="0.3" stroke-linecap="round" stroke-linejoin="round" />
<rect x="648" y="60.8" width="4.6" height="4.4" fill="#3a0808" stroke="#555" stroke-width="0.4"/>
<rect x="638.8" y="154.2" width="111.2" height="1.2" fill="#d6d6d6" />
<rect x="638.8" y="155.4" width="111.2" height="11.2" fill="#e0e0e0" />
<rect x="700.2" y="155.4" width="24.2" height="11.2" fill="#f0f0f0" />
<text x="642.4" y="162.6" font-size="4.3" fill="#666" text-anchor="start" font-weight="normal" textLength="20.6" lengthAdjust="spacingAndGlyphs" >Properties</text>
<text x="671" y="162.6" font-size="4.3" fill="#666" text-anchor="start" font-weight="normal" textLength="25" lengthAdjust="spacingAndGlyphs" >Adjustments</text>
<text x="704" y="162.6" font-size="4.3" fill="#222" text-anchor="start" font-weight="bold" textLength="16.8" lengthAdjust="spacingAndGlyphs" >Libraries</text>
<rect x="667" y="156.2" width="0.4" height="9.6" fill="#d0d0d0" />
<rect x="700" y="156.2" width="0.4" height="9.6" fill="#d0d0d0" />
<rect x="724.4" y="156.2" width="0.4" height="9.6" fill="#d0d0d0" />
<rect x="743.6" y="159.4" width="3.6" height="0.5" fill="#666" />
<rect x="743.6" y="160.5" width="3.6" height="0.5" fill="#666" />
<rect x="743.6" y="161.6" width="3.6" height="0.5" fill="#666" />
<rect x="743.6" y="162.70000000000002" width="3.6" height="0.5" fill="#666" />
<path d="M645,173.4 L643.8,174.8 L645,176.2" fill="none" stroke="#666" stroke-width="0.6" stroke-linecap="round" stroke-linejoin="round" />
<text x="648.6" y="176.3" font-size="3.5" fill="#777" text-anchor="start" font-weight="normal" textLength="28" lengthAdjust="spacingAndGlyphs" >THE WINE CO</text>
<circle cx="740.2" cy="173.6" r="1.5" fill="#333"/>
<path d="M737.6,177.4 C737.8,174.8 742.6,174.8 742.8,177.4 Z" fill="#333" stroke="#333" stroke-width="0.3" stroke-linecap="round" stroke-linejoin="round" />
<circle cx="740.2" cy="174.4" r="2.9" fill="none" stroke="#333" stroke-width="0.6"/>
<circle cx="646.6" cy="185.6" r="1.6" fill="none" stroke="#888" stroke-width="0.6"/>
<path d="M647.8,186.8 L649,188" fill="none" stroke="#888" stroke-width="0.6" stroke-linecap="round" stroke-linejoin="round" />
<text x="652.4" y="187.5" font-size="4.3" fill="#8e8e8e" text-anchor="start" font-weight="normal" textLength="47.4" lengthAdjust="spacingAndGlyphs" >Search current library</text>
<path d="M742.2,185.4 L743.5,186.7 L744.8,185.4" fill="none" stroke="#555" stroke-width="0.6" stroke-linecap="round" stroke-linejoin="round" />
<rect x="643.6" y="190.8" width="103" height="0.4" fill="#d8d8d8" />
<path d="M646.4,197.6 L650.6,197.6 L649,199.6 L649,202.2 L648,202.2 L648,199.6 Z" fill="#222" stroke="#222" stroke-width="0.4" stroke-linecap="round" stroke-linejoin="round" />
<g transform="translate(659,200) scale(1)">
<rect x="-2.6" y="-2.6" width="5.2" height="0.7" fill="#444" />
<rect x="-2.6" y="-1" width="3.4" height="0.7" fill="#444" />
<rect x="-2.6" y="0.6" width="2" height="0.7" fill="#444" />
<path d="M1.6,-0.6 L1.6,2.8 M0.6,1.9 L1.6,2.9 L2.6,1.9" fill="none" stroke="#444" stroke-width="0.5" stroke-linecap="round" stroke-linejoin="round" />
</g>
<g transform="translate(730,200) scale(1)">
<path d="M-1.6,-2.6 L-1.6,2.2 M-2.6,2.2 L2.8,2.2" fill="none" stroke="#555" stroke-width="0.55" stroke-linecap="round" stroke-linejoin="round" />
</g>
<g transform="translate(740,200) scale(1)">
<rect x="-2.6" y="-2.8" width="1.8" height="5.6" fill="#333" />
<rect x="0.2" y="-2.8" width="2.6" height="1.3" fill="#333" />
<rect x="0.2" y="-0.7" width="2.6" height="1.3" fill="#333" />
<rect x="0.2" y="1.5" width="2.6" height="1.3" fill="#333" />
</g>
<rect x="643.9" y="212.2" width="46.4" height="31.6" fill="#3a0503" />
<rect x="643.9" y="243.8" width="46.4" height="5.6" fill="#ffffff" />
<rect x="643.6" y="211.9" width="47" height="37.8" fill="none" stroke="#4a90e2" stroke-width="0.6" rx="0.6"/>
<text x="645.2" y="248.3" font-size="4.2" fill="#222" text-anchor="start" font-weight="normal" textLength="18.6" lengthAdjust="spacingAndGlyphs" >#3A0503</text>
<rect x="692.3" y="212.2" width="46.7" height="37.2" fill="#dca56b" />
<rect x="643.9" y="251.6" width="46.4" height="21" fill="#f7d6bd" />
<rect x="692.3" y="251.6" width="46.7" height="21" fill="#d8d8d8" />
<path id="arc" d="M705.6,269 A10.3,10.3 0 0 1 726.2,269" fill="none"/>
<text font-size="3.2" fill="#5a2a2a" font-weight="bold" letter-spacing="0.25"><textPath href="#arc" startOffset="1.2" textLength="30">THE WINE CO</textPath></text>
<path d="M711.6,271.8 L711.6,268.4 C711.6,267.6 712.3,267.4 712.3,266.6 L712.3,265 L713.7,265 L713.7,266.6 C713.7,267.4 714.4,267.6 714.4,268.4 L714.4,271.8 Z" fill="#4a1a1a" stroke="#4a1a1a" stroke-width="0.3" stroke-linecap="round" stroke-linejoin="round" />
<path d="M716.4,266.8 L719.6,266.8 C719.6,268.6 719,269.4 718,269.4 C717,269.4 716.4,268.6 716.4,266.8 Z" fill="#7a2a2a" stroke="#4a1a1a" stroke-width="0.3" stroke-linecap="round" stroke-linejoin="round" />
<path d="M718,269.4 L718,271.6 M716.8,271.8 L719.2,271.8" fill="none" stroke="#4a1a1a" stroke-width="0.4" stroke-linecap="round" stroke-linejoin="round" />
<rect x="638.8" y="272.6" width="111.2" height="12" fill="#f0f0f0" />
<rect x="745.2" y="208.4" width="3" height="18" rx="1.5" fill="#c2c2c2"/>
<path d="M646.6,280 C645.6,280 645.6,278.2 647,278.2 C647.2,276.4 650.2,276.2 650.8,277.8 C652.6,277.6 652.8,280 651.4,280 Z" fill="#333" stroke="#333" stroke-width="0.4" stroke-linecap="round" stroke-linejoin="round" />
<path d="M718.4,276.6 L720.6,276.6 L721.2,277.4 L723.8,277.4 L723.8,280.6 L718.4,280.6 Z" fill="#333" stroke="#333" stroke-width="0.4" stroke-linecap="round" stroke-linejoin="round" />
<path d="M727.2,278.6 L731.6,278.6 M729.4,276.4 L729.4,280.8" fill="none" stroke="#333" stroke-width="0.7" stroke-linecap="round" stroke-linejoin="round" />
<rect x="732.4" y="280.6" width="0.7" height="0.7" fill="#333" />
<path d="M738.8,277.4 L742.8,277.4 M739.4,277.4 L739.8,281 L741.8,281 L742.2,277.4 M740,276.6 L741.6,276.6" fill="none" stroke="#555" stroke-width="0.55" stroke-linecap="round" stroke-linejoin="round" />
<rect x="638.8" y="295" width="111.2" height="117.5" fill="#ebebeb" />
<rect x="638.8" y="284.4" width="111.2" height="11" fill="#dedede" />
<rect x="664.6" y="284.4" width="18" height="11" fill="#ebebeb" />
<text x="642.8" y="291.8" font-size="4.3" fill="#666" text-anchor="start" font-weight="normal" textLength="18" lengthAdjust="spacingAndGlyphs" >Channels</text>
<text x="668.7" y="291.8" font-size="4.3" fill="#222" text-anchor="start" font-weight="bold" textLength="10.2" lengthAdjust="spacingAndGlyphs" >Paths</text>
<rect x="664.4" y="285" width="0.4" height="9.6" fill="#d0d0d0" />
<rect x="682.6" y="285" width="0.4" height="9.6" fill="#d0d0d0" />
<rect x="743.6" y="288.0" width="3.6" height="0.5" fill="#666" />
<rect x="743.6" y="289.1" width="3.6" height="0.5" fill="#666" />
<rect x="743.6" y="290.2" width="3.6" height="0.5" fill="#666" />
<rect x="743.6" y="291.3" width="3.6" height="0.5" fill="#666" />
<rect x="638.8" y="402.8" width="111.2" height="9.7" fill="#eeeeee" />
<rect x="638.8" y="402.8" width="111.2" height="0.4" fill="#e0e0e0" />
<circle cx="672" cy="407.4" r="1.6" fill="#777"/>
<circle cx="682.8" cy="407.4" r="1.5" fill="none" stroke="#aaa" stroke-width="0.5"/>
<circle cx="693.4" cy="407.4" r="1.5" fill="none" stroke="#ccc" stroke-width="0.5" stroke-dasharray="0.8,0.5"/>
<path d="M704,405.2 L706.2,407.4 L704,409.6 L701.8,407.4 Z" fill="none" stroke="#888" stroke-width="0.5" stroke-linecap="round" stroke-linejoin="round" />
<rect x="711.6" y="405.4" width="5.4" height="4" fill="#222"/><circle cx="714.3" cy="407.4" r="1.2" fill="#fff"/>
<rect x="723.8" y="405.2" width="4.4" height="4.4" fill="none" stroke="#555" stroke-width="0.6"/>
<path d="M726,406.4 L726,408.4 M725,407.4 L727,407.4" fill="none" stroke="#555" stroke-width="0.5" stroke-linecap="round" stroke-linejoin="round" />
<path d="M734.6,405.8 L738.8,405.8 M735.2,405.8 L735.6,409.6 L737.8,409.6 L738.2,405.8" fill="none" stroke="#bbb" stroke-width="0.55" stroke-linecap="round" stroke-linejoin="round" />
<clipPath id="shc"><rect x="515" y="15" width="107.8" height="330"/></clipPath>
<g clip-path="url(#shc)"><rect x="529.6" y="27.6" width="93" height="305.4" fill="#000" opacity="0.42" filter="url(#sh)"/></g>
<rect x="529.8" y="26.3" width="93" height="305.4" fill="#ebebeb" />
<rect x="529.8" y="26.3" width="93" height="12.4" fill="#dcdcdc" />
<rect x="529.8" y="26.3" width="21.4" height="12.4" fill="#eeeeee" />
<text x="534.2" y="34.6" font-size="4.4" fill="#222" text-anchor="start" font-weight="bold" textLength="13" lengthAdjust="spacingAndGlyphs" >Layers</text>
<text x="554" y="34.6" font-size="4.3" fill="#666" text-anchor="start" font-weight="normal" textLength="12" lengthAdjust="spacingAndGlyphs" >Histor</text>
<text x="570" y="34.6" font-size="4.3" fill="#666" text-anchor="start" font-weight="normal" textLength="12" lengthAdjust="spacingAndGlyphs" >Action</text>
<text x="586" y="34.6" font-size="4.3" fill="#666" text-anchor="start" font-weight="normal" textLength="12.4" lengthAdjust="spacingAndGlyphs" >Comm</text>
<rect x="551.2" y="27.4" width="0.4" height="10.4" fill="#cfcfcf" />
<rect x="568" y="27.4" width="0.4" height="10.4" fill="#cfcfcf" />
<rect x="584" y="27.4" width="0.4" height="10.4" fill="#cfcfcf" />
<rect x="600.4" y="27.4" width="0.4" height="10.4" fill="#cfcfcf" />
<path d="M607.4,31.6 L608.8,33 L607.4,34.4 M609.6,31.6 L611,33 L609.6,34.4" fill="none" stroke="#444" stroke-width="0.55" stroke-linecap="round" stroke-linejoin="round" />
<rect x="613.4" y="30.4" width="0.5" height="5.4" fill="#888" />
<rect x="616.8" y="31.2" width="3.6" height="0.5" fill="#666" />
<rect x="616.8" y="32.3" width="3.6" height="0.5" fill="#666" />
<rect x="616.8" y="33.4" width="3.6" height="0.5" fill="#666" />
<rect x="616.8" y="34.5" width="3.6" height="0.5" fill="#666" />
<rect x="533.4" y="41.8" width="32.4" height="8" rx="1" fill="#f8f8f8" stroke="#e1e1e1" stroke-width="0.4"/>
<circle cx="536.8" cy="45.4" r="1.3" fill="none" stroke="#555" stroke-width="0.5"/>
<path d="M537.8,46.4 L538.8,47.4" fill="none" stroke="#555" stroke-width="0.5" stroke-linecap="round" stroke-linejoin="round" />
<text x="540" y="47.2" font-size="4.1" fill="#444" text-anchor="start" font-weight="normal" textLength="8" lengthAdjust="spacingAndGlyphs" >Kind</text>
<path d="M561,45.2 L562.2,46.4 L563.4,45.2" fill="none" stroke="#555" stroke-width="0.55" stroke-linecap="round" stroke-linejoin="round" />
<rect x="570.8" y="44" width="4.6" height="3.6" fill="none" stroke="#333" stroke-width="0.55"/>
<path d="M571.4,47 L572.8,45.6 L573.6,46.4 L574.2,45.9 L575,47 Z" fill="#333" stroke="#2b2b2b" stroke-width="0.2" stroke-linecap="round" stroke-linejoin="round" />
<circle cx="582" cy="45.8" r="1.9" fill="none" stroke="#333" stroke-width="0.55"/>
<path d="M580.6,47.2 A1.9,1.9 0 0 0 583.4,44.4 Z" fill="#333" stroke="#2b2b2b" stroke-width="0.2" stroke-linecap="round" stroke-linejoin="round" />
<text x="591.4" y="47.9" font-size="6" text-anchor="middle" fill="#222" font-weight="bold" style="font-family:'Liberation Serif',serif">T</text>
<rect x="599.2" y="44" width="3.6" height="3.6" fill="none" stroke="#333" stroke-width="0.45"/>
<rect x="598.7" y="43.5" width="1" height="1" fill="#333" />
<rect x="602.3" y="43.5" width="1" height="1" fill="#333" />
<rect x="598.7" y="47.1" width="1" height="1" fill="#333" />
<rect x="602.3" y="47.1" width="1" height="1" fill="#333" />
<path d="M608.6,44 L611,44 L612,45 L612,47.8 L608.6,47.8 Z" fill="none" stroke="#555" stroke-width="0.5" stroke-linecap="round" stroke-linejoin="round" />
<rect x="609.8" y="45.8" width="2.2" height="2" fill="#777" />
<circle cx="619.3" cy="44" r="1.3" fill="#222"/>
<rect x="533.4" y="52.4" width="49.2" height="8" rx="1" fill="#f8f8f8" stroke="#e1e1e1" stroke-width="0.4"/>
<text x="535.6" y="58" font-size="4.1" fill="#444" text-anchor="start" font-weight="normal" textLength="25" lengthAdjust="spacingAndGlyphs" >Pass Through</text>
<path d="M577.6,56 L578.8,57.2 L580,56" fill="none" stroke="#555" stroke-width="0.55" stroke-linecap="round" stroke-linejoin="round" />
<text x="584.2" y="58" font-size="4.1" fill="#777" text-anchor="start" font-weight="normal" textLength="14.4" lengthAdjust="spacingAndGlyphs" >Opacity:</text>
<rect x="601" y="52.4" width="14.6" height="8" rx="1" fill="#f8f8f8" stroke="#e1e1e1" stroke-width="0.4"/>
<text x="602.6" y="58" font-size="4.1" fill="#555" text-anchor="start" font-weight="normal" textLength="9.6" lengthAdjust="spacingAndGlyphs" >100%</text>
<path d="M616.6,56 L617.8,57.2 L619,56" fill="none" stroke="#555" stroke-width="0.55" stroke-linecap="round" stroke-linejoin="round" />
<text x="532.7" y="69" font-size="4.1" fill="#888" text-anchor="start" font-weight="normal" textLength="9.6" lengthAdjust="spacingAndGlyphs" >Lock:</text>
<rect x="545" y="65.4" width="4.4" height="4.4" rx="0.6" fill="none" stroke="#aaa" stroke-width="0.5" stroke-dasharray="0.9,0.6"/>
<path d="M554.6,69.8 L558.4,65.2" fill="none" stroke="#444" stroke-width="0.9" stroke-linecap="round" stroke-linejoin="round" />
<path d="M564,64.8 L564,70.4 M561.2,67.6 L566.8,67.6" fill="none" stroke="#555" stroke-width="0.5" stroke-linecap="round" stroke-linejoin="round" />
<path d="M570.8,65.2 L570.8,69.8 M569.8,65.2 L573,65.2 M573.4,66 L575,66 L575,69.6 L573.4,69.6 Z" fill="none" stroke="#333" stroke-width="0.55" stroke-linecap="round" stroke-linejoin="round" />
<rect x="579.6" y="66.8" width="4.4" height="3.6" rx="0.5" fill="#222"/>
<path d="M580.6,66.8 L580.6,65.8 C580.6,64.4 583,64.4 583,65.8 L583,66.8" fill="none" stroke="#222" stroke-width="0.6" stroke-linecap="round" stroke-linejoin="round" />
<text x="593" y="69" font-size="4.1" fill="#777" text-anchor="start" font-weight="normal" textLength="6.4" lengthAdjust="spacingAndGlyphs" >Fill:</text>
<rect x="601" y="63.4" width="14.6" height="8" rx="1" fill="#f8f8f8" stroke="#e1e1e1" stroke-width="0.4"/>
<text x="602.6" y="69" font-size="4.1" fill="#555" text-anchor="start" font-weight="normal" textLength="9.6" lengthAdjust="spacingAndGlyphs" >100%</text>
<path d="M616.6,67 L617.8,68.2 L619,67" fill="none" stroke="#555" stroke-width="0.55" stroke-linecap="round" stroke-linejoin="round" />
<rect x="531.4" y="73.4" width="86" height="53.6" fill="#f1f1f1" />
<rect x="542.3" y="74" width="74.7" height="9" fill="#c2c2c2" />
<path d="M534.0,78.6 C535.2,76.69999999999999 537.8,76.69999999999999 539.0,78.6 C537.8,80.5 535.2,80.5 534.0,78.6 Z" fill="#3a3a3a" stroke="#3a3a3a" stroke-width="0.3" stroke-linecap="round" stroke-linejoin="round" />
<circle cx="536.5" cy="78.6" r="0.8" fill="#e8e8e8"/>
<path d="M543.8,76.8 L545.4,78.5 L543.8,80.2" fill="none" stroke="#444" stroke-width="0.55" stroke-linecap="round" stroke-linejoin="round" />
<path d="M548.2,76.39999999999999 L550.4,76.39999999999999 L551,77.19999999999999 L553.8,77.19999999999999 L553.8,80.8 L548.2,80.8 Z" fill="none" stroke="#444" stroke-width="0.6" stroke-linecap="round" stroke-linejoin="round" />
<text x="558.4" y="80.2" font-size="4.1" fill="#333" text-anchor="start" font-weight="normal" textLength="14.2" lengthAdjust="spacingAndGlyphs" >Ellipses</text>
<path d="M534.0,88.5 C535.2,86.6 537.8,86.6 539.0,88.5 C537.8,90.4 535.2,90.4 534.0,88.5 Z" fill="#3a3a3a" stroke="#3a3a3a" stroke-width="0.3" stroke-linecap="round" stroke-linejoin="round" />
<circle cx="536.5" cy="88.5" r="0.8" fill="#e8e8e8"/>
<path d="M543.8,86.8 L545.4,88.5 L543.8,90.2" fill="none" stroke="#444" stroke-width="0.55" stroke-linecap="round" stroke-linejoin="round" />
<path d="M548.2,86.39999999999999 L550.4,86.39999999999999 L551,87.19999999999999 L553.8,87.19999999999999 L553.8,90.8 L548.2,90.8 Z" fill="none" stroke="#444" stroke-width="0.6" stroke-linecap="round" stroke-linejoin="round" />
<text x="558.4" y="90.1" font-size="4.1" fill="#333" text-anchor="start" font-weight="normal" textLength="20.6" lengthAdjust="spacingAndGlyphs" >Wine Glass</text>
<path d="M534.0,101.6 C535.2,99.69999999999999 537.8,99.69999999999999 539.0,101.6 C537.8,103.5 535.2,103.5 534.0,101.6 Z" fill="#3a3a3a" stroke="#3a3a3a" stroke-width="0.3" stroke-linecap="round" stroke-linejoin="round" />
<circle cx="536.5" cy="101.6" r="0.8" fill="#e8e8e8"/>
<rect x="544" y="95" width="9" height="12.6" fill="#fff" stroke="#555" stroke-width="0.5"/>
<rect x="546" y="101.4" width="5" height="0.5" fill="#777" />
<rect x="547" y="103" width="4.6" height="0.5" fill="#777" />
<rect x="549" y="104.2" width="3.4" height="3" fill="#888" />
<text x="556" y="103.2" font-size="4.1" fill="#333" text-anchor="start" font-weight="normal" textLength="36" lengthAdjust="spacingAndGlyphs" >Infographic_Sketch</text>
<path d="M534.0,117.4 C535.2,115.5 537.8,115.5 539.0,117.4 C537.8,119.30000000000001 535.2,119.30000000000001 534.0,117.4 Z" fill="#3a3a3a" stroke="#3a3a3a" stroke-width="0.3" stroke-linecap="round" stroke-linejoin="round" />
<circle cx="536.5" cy="117.4" r="0.8" fill="#e8e8e8"/>
<rect x="544" y="111.2" width="9" height="12.4" fill="#fff" stroke="#777" stroke-width="0.5"/>
<text x="556" y="119" font-size="4.1" fill="#333" text-anchor="start" font-weight="normal" textLength="22.8" lengthAdjust="spacingAndGlyphs" >Background</text>
<rect x="606" y="117" width="3.8" height="3.2" rx="0.4" fill="#444"/>
<path d="M606.8,117 L606.8,116.2 C606.8,115 609,115 609,116.2 L609,117" fill="none" stroke="#444" stroke-width="0.55" stroke-linecap="round" stroke-linejoin="round" />
<rect x="531.4" y="83.4" width="86" height="0.35" fill="#e0e0e0" />
<rect x="531.4" y="93.6" width="86" height="0.35" fill="#e0e0e0" />
<rect x="531.4" y="109.4" width="86" height="0.35" fill="#e0e0e0" />
<rect x="531.4" y="125.4" width="86" height="0.35" fill="#e0e0e0" />
<rect x="529.8" y="319.8" width="93" height="11.9" fill="#f3f3f3" />
<rect x="529.8" y="319.6" width="93" height="0.4" fill="#dcdcdc" />
<rect x="543.4" y="323" width="2.8" height="2" rx="1" fill="none" stroke="#bbb" stroke-width="0.5"/><rect x="545.8" y="323" width="2.8" height="2" rx="1" fill="none" stroke="#bbb" stroke-width="0.5"/>
<text x="554.6" y="326" font-size="5" fill="#444" font-style="italic" style="font-family:'Liberation Serif',serif">fx</text>
<rect x="558.8" y="326" width="0.7" height="0.7" fill="#444" />
<rect x="564.6" y="321.8" width="5.4" height="4.2" fill="#222"/><circle cx="567.3" cy="323.9" r="1.2" fill="#fff"/>
<circle cx="577.8" cy="324" r="2.2" fill="none" stroke="#333" stroke-width="0.55"/>
<path d="M576.2,325.6 A2.2,2.2 0 0 1 579.4,322.4 Z" fill="#333" stroke="#2b2b2b" stroke-width="0.2" stroke-linecap="round" stroke-linejoin="round" />
<rect x="580.4" y="326" width="0.7" height="0.7" fill="#444" />
<path d="M586,322 L588,322 L588.6,322.8 L591.2,322.8 L591.2,326 L586,326 Z" fill="none" stroke="#888" stroke-width="0.55" stroke-linecap="round" stroke-linejoin="round" />
<rect x="596.8" y="321.8" width="4.4" height="4.4" fill="none" stroke="#555" stroke-width="0.55"/>
<path d="M599,323 L599,325 M598,324 L600,324" fill="none" stroke="#555" stroke-width="0.45" stroke-linecap="round" stroke-linejoin="round" />
<path d="M607.4,322.2 L611.8,322.2 M608,322.2 L608.4,326.2 L610.8,326.2 L611.2,322.2 M608.8,321.4 L610.4,321.4" fill="none" stroke="#555" stroke-width="0.55" stroke-linecap="round" stroke-linejoin="round" />
<rect x="573.4" y="329.8" width="5.6" height="0.5" fill="#ccc" />
</svg></body></html>
